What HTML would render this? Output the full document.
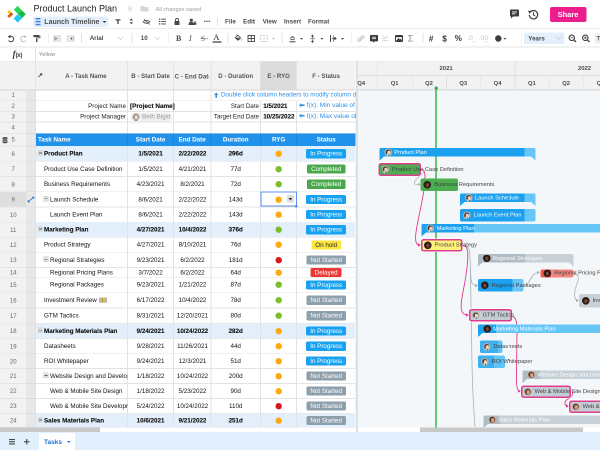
<!DOCTYPE html><html><head><meta charset="utf-8"><style>
html,body{margin:0;padding:0;width:600px;height:450px;overflow:hidden;background:#fff;font-family:"Liberation Sans", sans-serif;-webkit-font-smoothing:antialiased;}
#wrap{position:absolute;left:0;top:0;width:1200px;height:900px;transform:scale(0.5);transform-origin:0 0;will-change:transform;overflow:hidden;}
#root{position:absolute;left:0;top:0;width:600px;height:450px;overflow:hidden;zoom:2;background:#fff;}
</style></head><body><div id="wrap"><div id="root">
<svg style="position:absolute;left:0px;top:0px;overflow:visible;" width="30" height="25" viewBox="0 0 30 25">
<polygon points="17.7,5.9 21.6,10.1 18,14 13.8,9.7" fill="#24d653"/>
<polygon points="21.6,10.1 25.8,14.1 22.1,18.1 18,14" fill="#17b84a"/>
<polygon points="17.6,14.1 22.1,18.1 17.7,22.6 13.6,18.4" fill="#22c8ef"/>
<polygon points="9.4,10 11.4,12.2 9.4,14.2 7.2,11.9" fill="#f7c316"/>
<polygon points="11.4,12.2 13.2,14.2 11.1,16.2 9.3,14.2" fill="#c85a10"/>
<polygon points="9.3,14.1 11.2,16.1 9.1,18 7.2,16" fill="#ee5a12"/>
</svg>
<div style="position:absolute;left:33.5px;top:4.2px;font-size:9px;line-height:9px;color:#1a1a1a;font-weight:400;white-space:nowrap;">Product Launch Plan</div>
<svg style="position:absolute;left:126px;top:4.5px;overflow:visible;" width="8" height="8" viewBox="0 0 8 8"><polygon points="4,0.3 5.1,2.8 7.8,3 5.7,4.8 6.4,7.6 4,6.1 1.6,7.6 2.3,4.8 0.2,3 2.9,2.8" fill="#e6e6e6"/></svg>
<svg style="position:absolute;left:140.5px;top:5.5px;overflow:visible;" width="8" height="6" viewBox="0 0 8 6"><path d="M0,0.5 h3 l1,1 h4 v4.5 h-8z" fill="#d6d6d6"/></svg>
<div style="position:absolute;left:155.6px;top:6.6px;font-size:5.6px;line-height:5.6px;color:#9a9a9a;font-weight:400;white-space:nowrap;">All changes saved</div>
<div style="position:absolute;left:33px;top:16.3px;width:75.5px;height:10.5px;background:#e3f0fc;border-radius:1.5px;"></div>
<svg style="position:absolute;left:35.5px;top:17.8px;overflow:visible;" width="5" height="7.4" viewBox="0 0 5 7.4"><rect x="0" y="0" width="5" height="1.5" fill="#3a86ee"/><rect x="0" y="2.9" width="5" height="1.5" fill="#3a86ee"/><rect x="0" y="5.8" width="5" height="1.5" fill="#3a86ee"/></svg>
<div style="position:absolute;left:44.3px;top:14.600000000000001px;height:14px;font-size:7px;line-height:14px;color:#505050;font-weight:700;white-space:nowrap;">Launch Timeline</div>
<svg style="position:absolute;left:102.5px;top:20.8px;overflow:visible;" width="4" height="2" viewBox="0 0 4 2"><polygon points="0,0 4,0 2,2" fill="#444"/></svg>
<svg style="position:absolute;left:115.3px;top:19px;overflow:visible;" width="5" height="5" viewBox="0 0 5 5"><path d="M0,0.2 h5 v1.3 h-1.8 v3.5 h-1.4 v-3.5 h-1.8z" fill="#4a4a4a"/></svg>
<svg style="position:absolute;left:129.7px;top:18.6px;overflow:visible;" width="3.6" height="5.8" viewBox="0 0 3.6 5.8"><polygon points="1.8,0 3.6,2 0,2" fill="#4a4a4a"/><polygon points="1.8,5.8 3.6,3.8 0,3.8" fill="#4a4a4a"/></svg>
<svg style="position:absolute;left:142.3px;top:18.8px;overflow:visible;" width="8" height="5.6" viewBox="0 0 8 5.6"><path d="M0.6,2.8 Q4,-0.3 7.4,2.8 Q4,5.9 0.6,2.8z" fill="none" stroke="#4a4a4a" stroke-width="0.8"/><line x1="1.4" y1="0.3" x2="7.2" y2="5.4" stroke="#4a4a4a" stroke-width="0.8"/></svg>
<svg style="position:absolute;left:159px;top:18.3px;overflow:visible;" width="7" height="6" viewBox="0 0 7 6"><rect x="0" y="0" width="1.2" height="1.2" fill="#4a4a4a"/><rect x="0" y="2.4" width="1.2" height="1.2" fill="#4a4a4a"/><rect x="0" y="4.8" width="1.2" height="1.2" fill="#4a4a4a"/><rect x="2.2" y="0.2" width="4.8" height="0.9" fill="#4a4a4a"/><rect x="2.2" y="2.6" width="4.8" height="0.9" fill="#4a4a4a"/><rect x="2.2" y="5" width="4.8" height="0.9" fill="#4a4a4a"/></svg>
<svg style="position:absolute;left:174.5px;top:18px;overflow:visible;" width="5" height="7" viewBox="0 0 5 7"><path d="M1,3 v-1 a1.5,1.5 0 0 1 3,0 v1" fill="none" stroke="#4a4a4a" stroke-width="0.9"/><rect x="0" y="3" width="5" height="4" rx="0.5" fill="#4a4a4a"/></svg>
<svg style="position:absolute;left:188.3px;top:18.3px;overflow:visible;" width="8" height="6.5" viewBox="0 0 8 6.5"><circle cx="2.8" cy="1.7" r="1.6" fill="#4a4a4a"/><path d="M0,6.5 q0,-3.2 2.8,-3.2 q2.8,0 2.8,3.2z" fill="#4a4a4a"/><rect x="5.2" y="4" width="2.6" height="2.4" fill="#4a4a4a"/><path d="M5.8,4 v-0.6 a0.7,0.7 0 0 1 1.4,0 v0.6" fill="none" stroke="#4a4a4a" stroke-width="0.5"/></svg>
<svg style="position:absolute;left:204px;top:20.5px;overflow:visible;" width="6" height="2" viewBox="0 0 6 2"><rect x="0" y="0.2" width="1.4" height="1.2" fill="#4a4a4a"/><rect x="2.3" y="0.2" width="1.4" height="1.2" fill="#4a4a4a"/><rect x="4.6" y="0.2" width="1.4" height="1.2" fill="#4a4a4a"/></svg>
<div style="position:absolute;left:217px;top:18px;width:0.8px;height:8px;background:#e0e0e0;"></div>
<div style="position:absolute;left:225px;top:15.3px;height:12.6px;font-size:6.3px;line-height:12.6px;color:#4d4d4d;font-weight:700;white-space:nowrap;">File</div>
<div style="position:absolute;left:243px;top:15.3px;height:12.6px;font-size:6.3px;line-height:12.6px;color:#4d4d4d;font-weight:700;white-space:nowrap;">Edit</div>
<div style="position:absolute;left:262.6px;top:15.3px;height:12.6px;font-size:6.3px;line-height:12.6px;color:#4d4d4d;font-weight:700;white-space:nowrap;">View</div>
<div style="position:absolute;left:284px;top:15.3px;height:12.6px;font-size:6.3px;line-height:12.6px;color:#4d4d4d;font-weight:700;white-space:nowrap;">Insert</div>
<div style="position:absolute;left:308px;top:15.3px;height:12.6px;font-size:6.3px;line-height:12.6px;color:#4d4d4d;font-weight:700;white-space:nowrap;">Format</div>
<svg style="position:absolute;left:509.5px;top:9.5px;overflow:visible;" width="10" height="9" viewBox="0 0 10 9"><path d="M0.5,1 a1,1 0 0 1 1,-1 h7 a1,1 0 0 1 1,1 v5 a1,1 0 0 1 -1,1 h-5 l-2,2 v-2 h0 a1,1 0 0 1 -1,-1z" fill="#3c3c3c"/><rect x="2.5" y="2" width="5" height="0.9" fill="#fff"/><rect x="2.5" y="3.9" width="3.5" height="0.9" fill="#fff"/></svg>
<svg style="position:absolute;left:528px;top:9.5px;overflow:visible;" width="10" height="10" viewBox="0 0 10 10"><path d="M2.2,2.6 A4.2,4.2 0 1 1 1.3,5.6" fill="none" stroke="#3c3c3c" stroke-width="1.2"/><polygon points="0,1.2 3.6,1.4 1.6,4.4" fill="#3c3c3c"/><path d="M5.5,2.8 v2.6 l1.8,1.3" fill="none" stroke="#3c3c3c" stroke-width="1"/></svg>
<div style="position:absolute;left:550px;top:7px;width:36.3px;height:15px;background:#ec1d8c;border-radius:2px;"></div>
<div style="position:absolute;left:468px;top:7.1px;width:200px;height:15.0px;font-size:7.5px;line-height:15.0px;color:#fff;font-weight:700;text-align:center;white-space:nowrap;">Share</div>
<div style="position:absolute;left:0px;top:28px;width:600px;height:1px;background:#ececec;"></div>
<div style="position:absolute;left:0px;top:46.6px;width:600px;height:0.8px;background:#e4e4e4;"></div>
<svg style="position:absolute;left:7.5px;top:35px;overflow:visible;" width="7" height="7" viewBox="0 0 7 7"><path d="M2.2,1.6 A2.7,2.7 0 1 1 1.2,5.4" fill="none" stroke="#474747" stroke-width="1.1"/><polygon points="0,1.6 3,0 3,3.2" fill="#474747"/></svg>
<svg style="position:absolute;left:20px;top:35px;overflow:visible;" width="7" height="7" viewBox="0 0 7 7"><path d="M4.8,1.6 A2.7,2.7 0 1 0 5.8,5.4" fill="none" stroke="#c4c4c4" stroke-width="1"/><polygon points="7,1.6 4,0 4,3.2" fill="#c4c4c4"/></svg>
<svg style="position:absolute;left:33.2px;top:35.2px;overflow:visible;" width="8" height="7.5" viewBox="0 0 8 7.5"><rect x="0.3" y="0" width="6" height="2.1" rx="0.5" fill="#474747"/><path d="M6.3,1 h0.7 v1.9 h-3.3 v0.9" fill="none" stroke="#474747" stroke-width="0.7"/><rect x="3" y="3.6" width="1.4" height="3.4" fill="#474747"/></svg>
<div style="position:absolute;left:47.8px;top:33px;width:0.8px;height:10px;background:#e0e0e0;"></div>
<svg style="position:absolute;left:53px;top:35px;overflow:visible;" width="8" height="7" viewBox="0 0 8 7"><rect x="0" y="0" width="8" height="7" fill="#e6e6e6"/><rect x="1" y="1.5" width="0.7" height="4" fill="#999"/><polygon points="2.5,2.2 4,3.5 2.5,4.8" fill="#474747"/></svg>
<svg style="position:absolute;left:66.5px;top:35px;overflow:visible;" width="8" height="7" viewBox="0 0 8 7"><rect x="0" y="0" width="8" height="7" fill="#e6e6e6"/><rect x="6.3" y="1.5" width="0.7" height="4" fill="#999"/><polygon points="5.5,2.2 4,3.5 5.5,4.8" fill="#474747"/></svg>
<div style="position:absolute;left:81px;top:33px;width:0.8px;height:10px;background:#e0e0e0;"></div>
<div style="position:absolute;left:89.7px;top:32.199999999999996px;height:12.4px;font-size:6.2px;line-height:12.4px;color:#4a4a4a;font-weight:700;white-space:nowrap;">Arial</div>
<svg style="position:absolute;left:118px;top:37px;overflow:visible;" width="5" height="3" viewBox="0 0 5 3"><polyline points="0,0 2.5,2.5 5,0" fill="none" stroke="#c8c8c8" stroke-width="0.7"/></svg>
<div style="position:absolute;left:131.5px;top:33px;width:0.8px;height:10px;background:#e0e0e0;"></div>
<div style="position:absolute;left:140.8px;top:32.199999999999996px;height:12.4px;font-size:6.2px;line-height:12.4px;color:#4a4a4a;font-weight:700;white-space:nowrap;">10</div>
<svg style="position:absolute;left:155px;top:37px;overflow:visible;" width="5" height="3" viewBox="0 0 5 3"><polyline points="0,0 2.5,2.5 5,0" fill="none" stroke="#c8c8c8" stroke-width="0.7"/></svg>
<div style="position:absolute;left:168.3px;top:33px;width:0.8px;height:10px;background:#e0e0e0;"></div>
<div style="position:absolute;left:176px;top:30.6px;height:16px;font-size:8px;line-height:16px;color:#4a4a4a;font-weight:700;white-space:nowrap;font-family:'Liberation Serif',serif;">B</div>
<div style="position:absolute;left:189px;top:30.6px;height:16px;font-size:8px;line-height:16px;color:#4a4a4a;font-weight:400;white-space:nowrap;font-family:'Liberation Serif',serif;font-style:italic;">I</div>
<div style="position:absolute;left:201px;top:31.1px;height:15.0px;font-size:7.5px;line-height:15.0px;color:#5a5a5a;font-weight:400;white-space:nowrap;font-family:'Liberation Serif',serif;">S</div>
<div style="position:absolute;left:200.5px;top:38.3px;width:7.5px;height:0.8px;background:#5a5a5a;"></div>
<div style="position:absolute;left:213.3px;top:29.0px;height:17.2px;font-size:8.6px;line-height:17.2px;color:#2a2a2a;font-weight:400;white-space:nowrap;font-family:'Liberation Serif',serif;">A</div>
<div style="position:absolute;left:212.5px;top:41.4px;width:9.2px;height:1.3px;background:#111;"></div>
<div style="position:absolute;left:227.5px;top:33px;width:0.8px;height:10px;background:#e0e0e0;"></div>
<svg style="position:absolute;left:234px;top:34.5px;overflow:visible;" width="8" height="7.5" viewBox="0 0 8 7.5"><path d="M1.2,3.2 L3.8,0.8 L6.6,3.4 L4,5.8z" fill="none" stroke="#474747" stroke-width="0.8"/><path d="M1.2,3.2 L6.6,3.4 L4,5.8z" fill="#474747"/><path d="M7.3,4.4 q0.8,1 0,1.8 q-0.8,-0.8 0,-1.8z" fill="#474747"/><line x1="2.6" y1="0" x2="3.8" y2="1.2" stroke="#474747" stroke-width="0.7"/></svg>
<svg style="position:absolute;left:247.5px;top:35px;overflow:visible;" width="7.5" height="7" viewBox="0 0 7.5 7"><rect x="0.5" y="0.5" width="6.5" height="6" fill="none" stroke="#474747" stroke-width="0.9"/><line x1="3.75" y1="0.5" x2="3.75" y2="6.5" stroke="#474747" stroke-width="0.9"/><line x1="0.5" y1="3.5" x2="7" y2="3.5" stroke="#474747" stroke-width="0.9"/></svg>
<svg style="position:absolute;left:260px;top:35px;overflow:visible;" width="8" height="7" viewBox="0 0 8 7"><rect x="0.5" y="0.5" width="7" height="6" fill="none" stroke="#c4c4c4" stroke-width="0.8" stroke-dasharray="1.4,0.7"/><line x1="4" y1="0.5" x2="4" y2="6.5" stroke="#c4c4c4" stroke-width="0.6" stroke-dasharray="1,0.8"/><line x1="0.5" y1="3.5" x2="7.5" y2="3.5" stroke="#c4c4c4" stroke-width="0.6" stroke-dasharray="1,0.8"/></svg>
<svg style="position:absolute;left:272px;top:37.8px;overflow:visible;" width="3" height="2" viewBox="0 0 3 2"><polygon points="0,0 3,0 1.5,1.8" fill="#bbb"/></svg>
<div style="position:absolute;left:281.7px;top:33px;width:0.8px;height:10px;background:#e0e0e0;"></div>
<svg style="position:absolute;left:289px;top:34.8px;overflow:visible;" width="7" height="8" viewBox="0 0 7 8"><rect x="0.5" y="6.3" width="6" height="1" fill="#474747"/><rect x="1.5" y="4.2" width="4" height="0.9" fill="#474747"/><path d="M1.5,3.5 q2,-3.5 4,0" fill="none" stroke="#474747" stroke-width="0.9"/></svg>
<svg style="position:absolute;left:300px;top:37.8px;overflow:visible;" width="3" height="2" viewBox="0 0 3 2"><polygon points="0,0 3,0 1.5,1.8" fill="#474747"/></svg>
<svg style="position:absolute;left:310px;top:34.5px;overflow:visible;" width="5" height="8.5" viewBox="0 0 5 8.5"><polygon points="2.5,0 4.2,2 0.8,2" fill="#474747"/><polygon points="2.5,8.5 4.2,6.5 0.8,6.5" fill="#474747"/><rect x="2.1" y="1.8" width="0.8" height="1.8" fill="#474747"/><rect x="2.1" y="5" width="0.8" height="1.8" fill="#474747"/><rect x="0" y="4" width="5" height="0.6" fill="#474747"/></svg>
<svg style="position:absolute;left:320.5px;top:37.8px;overflow:visible;" width="3" height="2" viewBox="0 0 3 2"><polygon points="0,0 3,0 1.5,1.8" fill="#474747"/></svg>
<svg style="position:absolute;left:330px;top:35px;overflow:visible;" width="7" height="7" viewBox="0 0 7 7"><rect x="0" y="0" width="1" height="7" fill="#474747"/><path d="M2.3,3.5 h3.2 M4.5,2 l1.5,1.5 l-1.5,1.5" fill="none" stroke="#474747" stroke-width="0.9"/><rect x="3" y="0" width="0.9" height="7" fill="#474747" opacity="0.6"/></svg>
<svg style="position:absolute;left:340.8px;top:37.8px;overflow:visible;" width="3" height="2" viewBox="0 0 3 2"><polygon points="0,0 3,0 1.5,1.8" fill="#474747"/></svg>
<div style="position:absolute;left:350.8px;top:33px;width:0.8px;height:10px;background:#e0e0e0;"></div>
<svg style="position:absolute;left:357.5px;top:35px;overflow:visible;" width="7" height="7" viewBox="0 0 7 7"><path d="M3,2.5 l1.5,-1.5 a1.2,1.2 0 0 1 1.7,1.7 l-1.5,1.5 M4,4.5 l-1.5,1.5 a1.2,1.2 0 0 1 -1.7,-1.7 l1.5,-1.5 M2.5,4.5 l2,-2" fill="none" stroke="#bdbdbd" stroke-width="0.9"/></svg>
<svg style="position:absolute;left:370px;top:35px;overflow:visible;" width="8" height="8" viewBox="0 0 8 8"><path d="M0,0.8 a0.8,0.8 0 0 1 0.8,-0.8 h6.4 a0.8,0.8 0 0 1 0.8,0.8 v4.8 a0.8,0.8 0 0 1 -0.8,0.8 h-2.4 l-1,1.2 l-1,-1.2 h-2 a0.8,0.8 0 0 1 -0.8,-0.8z" fill="#3a3a3a"/><rect x="2" y="1.8" width="4" height="0.8" fill="#fff"/><rect x="2" y="3.3" width="4" height="0.8" fill="#fff"/></svg>
<svg style="position:absolute;left:382.5px;top:35px;overflow:visible;" width="6" height="6" viewBox="0 0 6 6"><path d="M0.5,0 v5.5 h5.5" fill="none" stroke="#cdcdcd" stroke-width="0.7"/><polyline points="1.5,4 2.8,2 3.8,3 5.5,0.8" fill="none" stroke="#cdcdcd" stroke-width="0.7"/></svg>
<svg style="position:absolute;left:395px;top:35px;overflow:visible;" width="8" height="7" viewBox="0 0 8 7"><rect x="0.5" y="0.5" width="7" height="6" rx="0.6" fill="none" stroke="#3a3a3a" stroke-width="1"/><polygon points="1,6 3.5,3 5,4.5 6,3.5 7,6" fill="#3a3a3a"/><rect x="1" y="1" width="6" height="1.2" fill="#3a3a3a"/></svg>
<div style="position:absolute;left:407.8px;top:29.6px;height:18px;font-size:9px;line-height:18px;color:#8a8a8a;font-weight:400;white-space:nowrap;">&#931;</div>
<div style="position:absolute;left:422.5px;top:33px;width:0.8px;height:10px;background:#e0e0e0;"></div>
<div style="position:absolute;left:428.8px;top:30.3px;height:16.6px;font-size:8.3px;line-height:16.6px;color:#333;font-weight:700;white-space:nowrap;">#</div>
<div style="position:absolute;left:442.3px;top:30.3px;height:16.6px;font-size:8.3px;line-height:16.6px;color:#333;font-weight:700;white-space:nowrap;">$</div>
<div style="position:absolute;left:454.8px;top:30.6px;height:16px;font-size:8px;line-height:16px;color:#333;font-weight:700;white-space:nowrap;">%</div>
<div style="position:absolute;left:467.5px;top:31.299999999999997px;height:13.0px;font-size:6.5px;line-height:13.0px;color:#c0c0c0;font-weight:400;white-space:nowrap;">.0</div>
<div style="position:absolute;left:479px;top:31.299999999999997px;height:13.0px;font-size:6.5px;line-height:13.0px;color:#c0c0c0;font-weight:400;white-space:nowrap;">.00</div>
<div style="position:absolute;left:471px;top:41.5px;width:4px;height:0.6px;background:#ccc;"></div>
<div style="position:absolute;left:485px;top:41.5px;width:3px;height:0.6px;background:#ccc;"></div>
<svg style="position:absolute;left:495px;top:35px;overflow:visible;" width="7" height="7" viewBox="0 0 7 7"><circle cx="3.3" cy="3.5" r="3.2" fill="#3c3c3c"/></svg>
<svg style="position:absolute;left:503.5px;top:37.8px;overflow:visible;" width="3" height="2" viewBox="0 0 3 2"><polygon points="0,0 3,0 1.5,1.8" fill="#444"/></svg>
<div style="position:absolute;left:520.8px;top:31px;width:0.8px;height:15px;background:#e6e6e6;"></div>
<div style="position:absolute;left:524px;top:32.7px;width:40.7px;height:11.3px;background:#e3f0fc;border-radius:1.5px;"></div>
<div style="position:absolute;left:528.3px;top:32.699999999999996px;height:12.4px;font-size:6.2px;line-height:12.4px;color:#4a4a4a;font-weight:700;white-space:nowrap;">Years</div>
<svg style="position:absolute;left:556.5px;top:37px;overflow:visible;" width="4.5" height="2.6" viewBox="0 0 4.5 2.6"><polyline points="0,0 2.25,2.3 4.5,0" fill="none" stroke="#b9c6d4" stroke-width="0.7"/></svg>
<svg style="position:absolute;left:568.7px;top:34.5px;overflow:visible;" width="8" height="8" viewBox="0 0 8 8"><circle cx="3.3" cy="3.3" r="2.7" fill="none" stroke="#3c3c3c" stroke-width="1.1"/><line x1="5.2" y1="5.2" x2="7.5" y2="7.5" stroke="#3c3c3c" stroke-width="1.3"/><line x1="2" y1="3.3" x2="4.6" y2="3.3" stroke="#3c3c3c" stroke-width="0.8"/></svg>
<svg style="position:absolute;left:582px;top:34.5px;overflow:visible;" width="8" height="8" viewBox="0 0 8 8"><circle cx="3.3" cy="3.3" r="2.7" fill="none" stroke="#3c3c3c" stroke-width="1.1"/><line x1="5.2" y1="5.2" x2="7.5" y2="7.5" stroke="#3c3c3c" stroke-width="1.3"/><line x1="2" y1="3.3" x2="4.6" y2="3.3" stroke="#3c3c3c" stroke-width="0.8"/><line x1="3.3" y1="2" x2="3.3" y2="4.6" stroke="#3c3c3c" stroke-width="0.8"/></svg>
<div style="position:absolute;left:594.5px;top:33px;width:8px;height:11px;background:#f0f0f0;border-radius:1.5px;"></div>
<div style="position:absolute;left:596.5px;top:32.4px;height:12px;font-size:6px;line-height:12px;color:#555;font-weight:700;white-space:nowrap;">T</div>
<div style="position:absolute;left:0px;top:60.8px;width:600px;height:0.7px;background:#e4e4e4;"></div>
<div style="position:absolute;left:35px;top:47px;width:0.8px;height:14px;background:#e4e4e4;"></div>
<div style="position:absolute;left:12.6px;top:48.2px;height:12px;font-size:6px;line-height:12px;color:#333;font-weight:400;white-space:nowrap;"><i style="font-family:'Liberation Serif',serif;font-size:9px;font-weight:700">f</i><span style="font-size:6px;font-weight:700;letter-spacing:-0.3px">(x)</span></div>
<div style="position:absolute;left:38.8px;top:48.1px;height:11.6px;font-size:5.8px;line-height:11.6px;color:#8a8a8a;font-weight:400;white-space:nowrap;">Yellow</div>
<div style="position:absolute;left:0px;top:61.3px;width:355.5px;height:28.5px;background:#f2f2f2;"></div>
<div style="position:absolute;left:260.5px;top:61.3px;width:36.5px;height:28.5px;background:#dcdcdc;"></div>
<div style="position:absolute;left:0px;top:89.8px;width:26px;height:337.7px;background:#f2f2f2;"></div>
<div style="position:absolute;left:26px;top:89.8px;width:9.5px;height:337.7px;background:#e8e8e8;"></div>
<div style="position:absolute;left:35.3px;top:61.3px;width:0.8px;height:366.2px;background:#dadada;"></div>
<div style="position:absolute;left:0px;top:192px;width:26px;height:15px;background:#dedede;"></div>
<div style="position:absolute;left:127.2px;top:61.3px;width:1px;height:28.5px;background:#e2e2e2;"></div>
<div style="position:absolute;left:172.9px;top:61.3px;width:1px;height:28.5px;background:#e2e2e2;"></div>
<div style="position:absolute;left:210.4px;top:61.3px;width:1px;height:28.5px;background:#e2e2e2;"></div>
<div style="position:absolute;left:260.0px;top:61.3px;width:1px;height:28.5px;background:#e2e2e2;"></div>
<div style="position:absolute;left:295.8px;top:61.3px;width:1px;height:28.5px;background:#e2e2e2;"></div>
<div style="position:absolute;left:0px;top:89.6px;width:355.5px;height:0.7px;background:#d6d6d6;"></div>
<div style="position:absolute;left:-14.150000000000006px;top:70.2px;width:200px;height:12.2px;font-size:6.1px;line-height:12.2px;color:#555;font-weight:700;text-align:center;white-space:nowrap;">A - Task Name</div>
<div style="position:absolute;left:50.55000000000001px;top:70.2px;width:200px;height:12.2px;font-size:6.1px;line-height:12.2px;color:#555;font-weight:700;text-align:center;white-space:nowrap;">B - Start Date</div>
<div style="position:absolute;left:174.6px;top:70.3px;width:34.3px;height:12px;overflow:hidden;"><div style="font-size:6.28px;line-height:12px;color:#555;font-weight:700;white-space:nowrap;">C - End Date</div></div>
<div style="position:absolute;left:135.7px;top:70.2px;width:200px;height:12.2px;font-size:6.1px;line-height:12.2px;color:#555;font-weight:700;text-align:center;white-space:nowrap;">D - Duration</div>
<div style="position:absolute;left:178.64999999999998px;top:70.2px;width:200px;height:12.2px;font-size:6.1px;line-height:12.2px;color:#555;font-weight:700;text-align:center;white-space:nowrap;">E - RYG</div>
<div style="position:absolute;left:226.14999999999998px;top:70.2px;width:200px;height:12.2px;font-size:6.1px;line-height:12.2px;color:#555;font-weight:700;text-align:center;white-space:nowrap;">F - Status</div>
<svg style="position:absolute;left:37.8px;top:72.3px;overflow:visible;" width="5" height="5" viewBox="0 0 5 5"><path d="M0.3,4.7 L2.2,2.8" stroke="#4a5060" stroke-width="0.8"/><path d="M1.6,2.2 L3.2,0.3 L4.7,1.8 L2.8,3.4z" fill="#4a5060"/></svg>
<div style="position:absolute;left:36px;top:90.3px;width:319.5px;height:337.2px;background:#fff;"></div>
<div style="position:absolute;left:355.8px;top:61.3px;width:2.2px;height:371px;background:#e0e0e0;"></div>
<div style="position:absolute;left:36px;top:100.45px;width:319.5px;height:0.7px;background:#e3e3e3;"></div>
<div style="position:absolute;left:36px;top:111.15px;width:319.5px;height:0.7px;background:#e3e3e3;"></div>
<div style="position:absolute;left:36px;top:121.65px;width:319.5px;height:0.7px;background:#e3e3e3;"></div>
<div style="position:absolute;left:36px;top:133.15px;width:319.5px;height:0.7px;background:#e3e3e3;"></div>
<div style="position:absolute;left:127.2px;top:90.3px;width:1px;height:43.2px;background:#e3e3e3;"></div>
<div style="position:absolute;left:172.9px;top:90.3px;width:1px;height:43.2px;background:#e3e3e3;"></div>
<div style="position:absolute;left:210.4px;top:90.3px;width:1px;height:43.2px;background:#e3e3e3;"></div>
<div style="position:absolute;left:260.0px;top:100.8px;width:1px;height:32.7px;background:#e3e3e3;"></div>
<div style="position:absolute;left:295.8px;top:100.8px;width:1px;height:32.7px;background:#e3e3e3;"></div>
<div style="position:absolute;left:355px;top:90.3px;width:0.5px;height:337px;background:#e3e3e3;"></div>
<div style="position:absolute;left:-86.8px;top:89.2px;width:200px;height:12px;font-size:6px;line-height:12px;color:#666;font-weight:400;text-align:center;white-space:nowrap;">1</div>
<div style="position:absolute;left:0px;top:100.45px;width:26px;height:0.7px;background:#e4e4e4;"></div>
<div style="position:absolute;left:26px;top:100.45px;width:9.5px;height:0.7px;background:#dcdcdc;"></div>
<div style="position:absolute;left:-86.8px;top:99.95px;width:200px;height:12px;font-size:6px;line-height:12px;color:#666;font-weight:400;text-align:center;white-space:nowrap;">2</div>
<div style="position:absolute;left:0px;top:111.15px;width:26px;height:0.7px;background:#e4e4e4;"></div>
<div style="position:absolute;left:26px;top:111.15px;width:9.5px;height:0.7px;background:#dcdcdc;"></div>
<div style="position:absolute;left:-86.8px;top:110.55px;width:200px;height:12px;font-size:6px;line-height:12px;color:#666;font-weight:400;text-align:center;white-space:nowrap;">3</div>
<div style="position:absolute;left:0px;top:121.65px;width:26px;height:0.7px;background:#e4e4e4;"></div>
<div style="position:absolute;left:26px;top:121.65px;width:9.5px;height:0.7px;background:#dcdcdc;"></div>
<div style="position:absolute;left:-86.8px;top:121.55px;width:200px;height:12px;font-size:6px;line-height:12px;color:#666;font-weight:400;text-align:center;white-space:nowrap;">4</div>
<div style="position:absolute;left:0px;top:133.15px;width:26px;height:0.7px;background:#e4e4e4;"></div>
<div style="position:absolute;left:26px;top:133.15px;width:9.5px;height:0.7px;background:#dcdcdc;"></div>
<div style="position:absolute;left:-86.8px;top:133.55px;width:200px;height:12px;font-size:6px;line-height:12px;color:#666;font-weight:400;text-align:center;white-space:nowrap;">5</div>
<div style="position:absolute;left:0px;top:145.65px;width:26px;height:0.7px;background:#e4e4e4;"></div>
<div style="position:absolute;left:26px;top:145.65px;width:9.5px;height:0.7px;background:#dcdcdc;"></div>
<div style="position:absolute;left:-86.8px;top:147.85px;width:200px;height:12px;font-size:6px;line-height:12px;color:#666;font-weight:400;text-align:center;white-space:nowrap;">6</div>
<div style="position:absolute;left:0px;top:160.95000000000002px;width:26px;height:0.7px;background:#e4e4e4;"></div>
<div style="position:absolute;left:26px;top:160.95000000000002px;width:9.5px;height:0.7px;background:#dcdcdc;"></div>
<div style="position:absolute;left:-86.8px;top:163.1px;width:200px;height:12px;font-size:6px;line-height:12px;color:#666;font-weight:400;text-align:center;white-space:nowrap;">7</div>
<div style="position:absolute;left:0px;top:176.15px;width:26px;height:0.7px;background:#e4e4e4;"></div>
<div style="position:absolute;left:26px;top:176.15px;width:9.5px;height:0.7px;background:#dcdcdc;"></div>
<div style="position:absolute;left:-86.8px;top:178.35px;width:200px;height:12px;font-size:6px;line-height:12px;color:#666;font-weight:400;text-align:center;white-space:nowrap;">8</div>
<div style="position:absolute;left:0px;top:191.45000000000002px;width:26px;height:0.7px;background:#e4e4e4;"></div>
<div style="position:absolute;left:26px;top:191.45000000000002px;width:9.5px;height:0.7px;background:#dcdcdc;"></div>
<div style="position:absolute;left:-86.8px;top:193.6px;width:200px;height:12px;font-size:6px;line-height:12px;color:#666;font-weight:400;text-align:center;white-space:nowrap;">9</div>
<div style="position:absolute;left:0px;top:206.65px;width:26px;height:0.7px;background:#e4e4e4;"></div>
<div style="position:absolute;left:26px;top:206.65px;width:9.5px;height:0.7px;background:#dcdcdc;"></div>
<div style="position:absolute;left:-86.8px;top:208.75px;width:200px;height:12px;font-size:6px;line-height:12px;color:#666;font-weight:400;text-align:center;white-space:nowrap;">10</div>
<div style="position:absolute;left:0px;top:221.75px;width:26px;height:0.7px;background:#e4e4e4;"></div>
<div style="position:absolute;left:26px;top:221.75px;width:9.5px;height:0.7px;background:#dcdcdc;"></div>
<div style="position:absolute;left:-86.8px;top:223.84999999999997px;width:200px;height:12px;font-size:6px;line-height:12px;color:#666;font-weight:400;text-align:center;white-space:nowrap;">11</div>
<div style="position:absolute;left:0px;top:236.85px;width:26px;height:0.7px;background:#e4e4e4;"></div>
<div style="position:absolute;left:26px;top:236.85px;width:9.5px;height:0.7px;background:#dcdcdc;"></div>
<div style="position:absolute;left:-86.8px;top:238.95px;width:200px;height:12px;font-size:6px;line-height:12px;color:#666;font-weight:400;text-align:center;white-space:nowrap;">12</div>
<div style="position:absolute;left:0px;top:251.95000000000002px;width:26px;height:0.7px;background:#e4e4e4;"></div>
<div style="position:absolute;left:26px;top:251.95000000000002px;width:9.5px;height:0.7px;background:#dcdcdc;"></div>
<div style="position:absolute;left:-86.8px;top:254.09999999999997px;width:200px;height:12px;font-size:6px;line-height:12px;color:#666;font-weight:400;text-align:center;white-space:nowrap;">13</div>
<div style="position:absolute;left:0px;top:267.15px;width:26px;height:0.7px;background:#e4e4e4;"></div>
<div style="position:absolute;left:26px;top:267.15px;width:9.5px;height:0.7px;background:#dcdcdc;"></div>
<div style="position:absolute;left:-86.8px;top:266.65px;width:200px;height:12px;font-size:6px;line-height:12px;color:#666;font-weight:400;text-align:center;white-space:nowrap;">14</div>
<div style="position:absolute;left:0px;top:277.04999999999995px;width:26px;height:0.7px;background:#e4e4e4;"></div>
<div style="position:absolute;left:26px;top:277.04999999999995px;width:9.5px;height:0.7px;background:#dcdcdc;"></div>
<div style="position:absolute;left:-86.8px;top:278.99999999999994px;width:200px;height:12px;font-size:6px;line-height:12px;color:#666;font-weight:400;text-align:center;white-space:nowrap;">15</div>
<div style="position:absolute;left:0px;top:291.84999999999997px;width:26px;height:0.7px;background:#e4e4e4;"></div>
<div style="position:absolute;left:26px;top:291.84999999999997px;width:9.5px;height:0.7px;background:#dcdcdc;"></div>
<div style="position:absolute;left:-86.8px;top:294.3px;width:200px;height:12px;font-size:6px;line-height:12px;color:#666;font-weight:400;text-align:center;white-space:nowrap;">16</div>
<div style="position:absolute;left:0px;top:307.65px;width:26px;height:0.7px;background:#e4e4e4;"></div>
<div style="position:absolute;left:26px;top:307.65px;width:9.5px;height:0.7px;background:#dcdcdc;"></div>
<div style="position:absolute;left:-86.8px;top:309.84999999999997px;width:200px;height:12px;font-size:6px;line-height:12px;color:#666;font-weight:400;text-align:center;white-space:nowrap;">17</div>
<div style="position:absolute;left:0px;top:322.95px;width:26px;height:0.7px;background:#e4e4e4;"></div>
<div style="position:absolute;left:26px;top:322.95px;width:9.5px;height:0.7px;background:#dcdcdc;"></div>
<div style="position:absolute;left:-86.8px;top:325.15000000000003px;width:200px;height:12px;font-size:6px;line-height:12px;color:#666;font-weight:400;text-align:center;white-space:nowrap;">18</div>
<div style="position:absolute;left:0px;top:338.25px;width:26px;height:0.7px;background:#e4e4e4;"></div>
<div style="position:absolute;left:26px;top:338.25px;width:9.5px;height:0.7px;background:#dcdcdc;"></div>
<div style="position:absolute;left:-86.8px;top:340.3px;width:200px;height:12px;font-size:6px;line-height:12px;color:#666;font-weight:400;text-align:center;white-space:nowrap;">19</div>
<div style="position:absolute;left:0px;top:353.25px;width:26px;height:0.7px;background:#e4e4e4;"></div>
<div style="position:absolute;left:26px;top:353.25px;width:9.5px;height:0.7px;background:#dcdcdc;"></div>
<div style="position:absolute;left:-86.8px;top:355.25px;width:200px;height:12px;font-size:6px;line-height:12px;color:#666;font-weight:400;text-align:center;white-space:nowrap;">20</div>
<div style="position:absolute;left:0px;top:368.15px;width:26px;height:0.7px;background:#e4e4e4;"></div>
<div style="position:absolute;left:26px;top:368.15px;width:9.5px;height:0.7px;background:#dcdcdc;"></div>
<div style="position:absolute;left:-86.8px;top:370.2px;width:200px;height:12px;font-size:6px;line-height:12px;color:#666;font-weight:400;text-align:center;white-space:nowrap;">21</div>
<div style="position:absolute;left:0px;top:383.15px;width:26px;height:0.7px;background:#e4e4e4;"></div>
<div style="position:absolute;left:26px;top:383.15px;width:9.5px;height:0.7px;background:#dcdcdc;"></div>
<div style="position:absolute;left:-86.8px;top:385.2px;width:200px;height:12px;font-size:6px;line-height:12px;color:#666;font-weight:400;text-align:center;white-space:nowrap;">22</div>
<div style="position:absolute;left:0px;top:398.15px;width:26px;height:0.7px;background:#e4e4e4;"></div>
<div style="position:absolute;left:26px;top:398.15px;width:9.5px;height:0.7px;background:#dcdcdc;"></div>
<div style="position:absolute;left:-86.8px;top:400.2px;width:200px;height:12px;font-size:6px;line-height:12px;color:#666;font-weight:400;text-align:center;white-space:nowrap;">23</div>
<div style="position:absolute;left:0px;top:413.15px;width:26px;height:0.7px;background:#e4e4e4;"></div>
<div style="position:absolute;left:26px;top:413.15px;width:9.5px;height:0.7px;background:#dcdcdc;"></div>
<div style="position:absolute;left:-86.8px;top:414.7px;width:200px;height:12px;font-size:6px;line-height:12px;color:#666;font-weight:400;text-align:center;white-space:nowrap;">24</div>
<div style="position:absolute;left:0px;top:427.15px;width:26px;height:0.7px;background:#e4e4e4;"></div>
<div style="position:absolute;left:26px;top:427.15px;width:9.5px;height:0.7px;background:#dcdcdc;"></div>
<svg style="position:absolute;left:214.2px;top:92.3px;overflow:visible;" width="4.4" height="5.4" viewBox="0 0 4.4 5.4"><polygon points="2.2,0 4.4,2.4 3,2.4 3,5.4 1.4,5.4 1.4,2.4 0,2.4" fill="#2e90e6"/></svg>
<div style="position:absolute;left:221px;top:88.7px;height:12.6px;font-size:6.3px;line-height:12.6px;color:#2e90e6;font-weight:400;white-space:nowrap;">Double click column headers to modify column details</div>
<div style="position:absolute;left:-74px;top:99.95px;width:200px;height:12.5px;font-size:6.25px;line-height:12.5px;color:#1e1e1e;font-weight:400;text-align:right;white-space:nowrap;">Project Name</div>
<div style="position:absolute;left:130px;top:99.85000000000001px;height:12.7px;font-size:6.35px;line-height:12.7px;color:#111;font-weight:700;white-space:nowrap;-webkit-text-stroke:0.12px #111;">[Project Name]</div>
<div style="position:absolute;left:-74px;top:110.65px;width:200px;height:12.5px;font-size:6.25px;line-height:12.5px;color:#1e1e1e;font-weight:400;text-align:right;white-space:nowrap;">Project Manager</div>
<div style="position:absolute;left:130.7px;top:112.6px;width:41.3px;height:8.8px;background:#f0f0f0;border-radius:4.4px;"></div>
<svg style="position:absolute;left:132px;top:113px;overflow:visible;" width="8" height="8" viewBox="0 0 8 8"><circle cx="4" cy="4" r="3.9" fill="#d5d0cc"/><circle cx="4" cy="3.8" r="2.9" fill="#9a8478"/><ellipse cx="4.2" cy="4.1" rx="1.6" ry="2" fill="#eddcd0"/><path d="M2.3,7.6 q1.8,-1.6 3.4,0z" fill="#3c7a77"/></svg>
<div style="position:absolute;left:142px;top:110.65px;height:12.5px;font-size:6.25px;line-height:12.5px;color:#9a9a9a;font-weight:400;white-space:nowrap;">Beth Bigid</div>
<div style="position:absolute;left:59px;top:99.95px;width:200px;height:12.5px;font-size:6.25px;line-height:12.5px;color:#1e1e1e;font-weight:400;text-align:right;white-space:nowrap;">Start Date</div>
<div style="position:absolute;left:263.2px;top:99.75px;height:12.5px;font-size:6.25px;line-height:12.5px;color:#111;font-weight:700;white-space:nowrap;-webkit-text-stroke:0.12px #111;">1/5/2021</div>
<div style="position:absolute;left:59px;top:110.65px;width:200px;height:12.5px;font-size:6.25px;line-height:12.5px;color:#1e1e1e;font-weight:400;text-align:right;white-space:nowrap;">Target End Date</div>
<div style="position:absolute;left:263.2px;top:110.45px;height:12.5px;font-size:6.25px;line-height:12.5px;color:#111;font-weight:700;white-space:nowrap;-webkit-text-stroke:0.12px #111;">10/25/2022</div>
<svg style="position:absolute;left:299px;top:102.8px;overflow:visible;" width="5.6" height="4.4" viewBox="0 0 5.6 4.4"><polygon points="0,2.2 2.3,0 2.3,1.4 5.6,1.4 5.6,3 2.3,3 2.3,4.4" fill="#2e90e6"/></svg>
<div style="position:absolute;left:306.8px;top:98.7px;height:13.0px;font-size:6.5px;line-height:13.0px;color:#2e90e6;font-weight:400;white-space:nowrap;">f(x): Min value of Start Date</div>
<svg style="position:absolute;left:299px;top:113.5px;overflow:visible;" width="5.6" height="4.4" viewBox="0 0 5.6 4.4"><polygon points="0,2.2 2.3,0 2.3,1.4 5.6,1.4 5.6,3 2.3,3 2.3,4.4" fill="#2e90e6"/></svg>
<div style="position:absolute;left:306.8px;top:109.4px;height:13.0px;font-size:6.5px;line-height:13.0px;color:#2e90e6;font-weight:400;white-space:nowrap;">f(x): Max value of End Date</div>
<div style="position:absolute;left:36px;top:133.5px;width:319.5px;height:12.5px;background:#2192ec;"></div>
<div style="position:absolute;left:127.2px;top:133.5px;width:1px;height:12.5px;background:#2083d6;"></div>
<div style="position:absolute;left:172.9px;top:133.5px;width:1px;height:12.5px;background:#2083d6;"></div>
<div style="position:absolute;left:210.4px;top:133.5px;width:1px;height:12.5px;background:#2083d6;"></div>
<div style="position:absolute;left:260.0px;top:133.5px;width:1px;height:12.5px;background:#2083d6;"></div>
<div style="position:absolute;left:295.8px;top:133.5px;width:1px;height:12.5px;background:#2083d6;"></div>
<div style="position:absolute;left:38px;top:133.5px;height:12.5px;font-size:6.25px;line-height:12.5px;color:#fff;font-weight:700;white-space:nowrap;">Task Name</div>
<div style="position:absolute;left:50.55000000000001px;top:133.5px;width:200px;height:12.5px;font-size:6.25px;line-height:12.5px;color:#fff;font-weight:700;text-align:center;white-space:nowrap;">Start Date</div>
<div style="position:absolute;left:92.15px;top:133.5px;width:200px;height:12.5px;font-size:6.25px;line-height:12.5px;color:#fff;font-weight:700;text-align:center;white-space:nowrap;">End Date</div>
<div style="position:absolute;left:135.7px;top:133.5px;width:200px;height:12.5px;font-size:6.25px;line-height:12.5px;color:#fff;font-weight:700;text-align:center;white-space:nowrap;">Duration</div>
<div style="position:absolute;left:178.64999999999998px;top:133.5px;width:200px;height:12.5px;font-size:6.25px;line-height:12.5px;color:#fff;font-weight:700;text-align:center;white-space:nowrap;">RYG</div>
<div style="position:absolute;left:226.14999999999998px;top:133.5px;width:200px;height:12.5px;font-size:6.25px;line-height:12.5px;color:#fff;font-weight:700;text-align:center;white-space:nowrap;">Status</div>
<svg style="position:absolute;left:2.3px;top:136.8px;overflow:visible;" width="5" height="6.2" viewBox="0 0 5 6.2"><ellipse cx="2.5" cy="1" rx="2.5" ry="1" fill="#555"/><rect x="0" y="1" width="5" height="4.2" fill="#555"/><ellipse cx="2.5" cy="5.2" rx="2.5" ry="1" fill="#555"/><path d="M0,2.5 q2.5,1.2 5,0 M0,3.9 q2.5,1.2 5,0" stroke="#ddd" stroke-width="0.45" fill="none"/></svg>
<div style="position:absolute;left:36px;top:146px;width:319.5px;height:15.300000000000011px;background:#e3f0fb;"></div>
<div style="position:absolute;left:36px;top:160.95000000000002px;width:319.5px;height:0.7px;background:#e3e3e3;"></div>
<div style="position:absolute;left:127.2px;top:146px;width:1px;height:15.300000000000011px;background:#e3e3e3;"></div>
<div style="position:absolute;left:172.9px;top:146px;width:1px;height:15.300000000000011px;background:#e3e3e3;"></div>
<div style="position:absolute;left:210.4px;top:146px;width:1px;height:15.300000000000011px;background:#e3e3e3;"></div>
<div style="position:absolute;left:260.0px;top:146px;width:1px;height:15.300000000000011px;background:#e3e3e3;"></div>
<div style="position:absolute;left:295.8px;top:146px;width:1px;height:15.300000000000011px;background:#e3e3e3;"></div>
<div style="position:absolute;left:38.0px;top:150.15px;width:4.6px;height:5.6px;background:#e0e0e0;border:0.5px solid #c8c8c8;box-sizing:border-box;"></div>
<div style="position:absolute;left:38.8px;top:152.65px;width:3px;height:0.75px;background:#555;"></div>
<div style="position:absolute;left:44px;top:147.5px;width:83.3px;height:12.5px;overflow:hidden;font-size:6.25px;line-height:12.5px;color:#111;font-weight:700;white-space:nowrap;-webkit-text-stroke:0.12px #111;">Product Plan</div>
<div style="position:absolute;left:50.55000000000001px;top:147.5px;width:200px;height:12.5px;font-size:6.25px;line-height:12.5px;color:#111;font-weight:700;text-align:center;white-space:nowrap;-webkit-text-stroke:0.12px #111;">1/5/2021</div>
<div style="position:absolute;left:174.2px;top:147.5px;width:36.6px;height:12.5px;overflow:hidden;text-align:center;font-size:6.25px;line-height:12.5px;color:#111;font-weight:700;white-space:nowrap;-webkit-text-stroke:0.12px #111;"><span style="display:inline-block;width:200px;margin-left:-81.7px">2/22/2022</span></div>
<div style="position:absolute;left:135.7px;top:147.5px;width:200px;height:12.5px;font-size:6.25px;line-height:12.5px;color:#111;font-weight:700;text-align:center;white-space:nowrap;-webkit-text-stroke:0.12px #111;">296d</div>
<svg style="position:absolute;left:275.7px;top:150.55px;overflow:visible;" width="6.4" height="6.4" viewBox="0 0 6.4 6.4"><circle cx="3.2" cy="3.2" r="3.2" fill="#fcaa12"/></svg>
<div style="position:absolute;left:266.2px;top:149.15px;width:120px;height:9.2px;text-align:center;"><span style="display:inline-block;background:#18a1f0;color:#fff;border-radius:1.6px;padding:0 4px;font-size:6.25px;line-height:9.2px;height:9.2px;white-space:nowrap;vertical-align:top">In Progress</span></div>
<div style="position:absolute;left:36px;top:176.15px;width:319.5px;height:0.7px;background:#e3e3e3;"></div>
<div style="position:absolute;left:127.2px;top:161.3px;width:1px;height:15.199999999999989px;background:#e3e3e3;"></div>
<div style="position:absolute;left:172.9px;top:161.3px;width:1px;height:15.199999999999989px;background:#e3e3e3;"></div>
<div style="position:absolute;left:210.4px;top:161.3px;width:1px;height:15.199999999999989px;background:#e3e3e3;"></div>
<div style="position:absolute;left:260.0px;top:161.3px;width:1px;height:15.199999999999989px;background:#e3e3e3;"></div>
<div style="position:absolute;left:295.8px;top:161.3px;width:1px;height:15.199999999999989px;background:#e3e3e3;"></div>
<div style="position:absolute;left:44px;top:162.75px;width:83.3px;height:12.5px;overflow:hidden;font-size:6.25px;line-height:12.5px;color:#111;font-weight:400;white-space:nowrap;">Product Use Case Definition</div>
<div style="position:absolute;left:50.55000000000001px;top:162.75px;width:200px;height:12.5px;font-size:6.25px;line-height:12.5px;color:#111;font-weight:400;text-align:center;white-space:nowrap;">1/5/2021</div>
<div style="position:absolute;left:174.2px;top:162.75px;width:36.6px;height:12.5px;overflow:hidden;text-align:center;font-size:6.25px;line-height:12.5px;color:#111;font-weight:400;white-space:nowrap;"><span style="display:inline-block;width:200px;margin-left:-81.7px">4/21/2021</span></div>
<div style="position:absolute;left:135.7px;top:162.75px;width:200px;height:12.5px;font-size:6.25px;line-height:12.5px;color:#111;font-weight:400;text-align:center;white-space:nowrap;">77d</div>
<svg style="position:absolute;left:275.7px;top:165.8px;overflow:visible;" width="6.4" height="6.4" viewBox="0 0 6.4 6.4"><circle cx="3.2" cy="3.2" r="3.2" fill="#7bbf31"/></svg>
<div style="position:absolute;left:266.2px;top:164.4px;width:120px;height:9.2px;text-align:center;"><span style="display:inline-block;background:#4aa84c;color:#fff;border-radius:1.6px;padding:0 4px;font-size:6.25px;line-height:9.2px;height:9.2px;white-space:nowrap;vertical-align:top">Completed</span></div>
<div style="position:absolute;left:36px;top:191.45000000000002px;width:319.5px;height:0.7px;background:#e3e3e3;"></div>
<div style="position:absolute;left:127.2px;top:176.5px;width:1px;height:15.300000000000011px;background:#e3e3e3;"></div>
<div style="position:absolute;left:172.9px;top:176.5px;width:1px;height:15.300000000000011px;background:#e3e3e3;"></div>
<div style="position:absolute;left:210.4px;top:176.5px;width:1px;height:15.300000000000011px;background:#e3e3e3;"></div>
<div style="position:absolute;left:260.0px;top:176.5px;width:1px;height:15.300000000000011px;background:#e3e3e3;"></div>
<div style="position:absolute;left:295.8px;top:176.5px;width:1px;height:15.300000000000011px;background:#e3e3e3;"></div>
<div style="position:absolute;left:44px;top:178.0px;width:83.3px;height:12.5px;overflow:hidden;font-size:6.25px;line-height:12.5px;color:#111;font-weight:400;white-space:nowrap;">Business Requirements</div>
<div style="position:absolute;left:50.55000000000001px;top:178.0px;width:200px;height:12.5px;font-size:6.25px;line-height:12.5px;color:#111;font-weight:400;text-align:center;white-space:nowrap;">4/23/2021</div>
<div style="position:absolute;left:174.2px;top:178.0px;width:36.6px;height:12.5px;overflow:hidden;text-align:center;font-size:6.25px;line-height:12.5px;color:#111;font-weight:400;white-space:nowrap;"><span style="display:inline-block;width:200px;margin-left:-81.7px">8/2/2021</span></div>
<div style="position:absolute;left:135.7px;top:178.0px;width:200px;height:12.5px;font-size:6.25px;line-height:12.5px;color:#111;font-weight:400;text-align:center;white-space:nowrap;">72d</div>
<svg style="position:absolute;left:275.7px;top:181.05px;overflow:visible;" width="6.4" height="6.4" viewBox="0 0 6.4 6.4"><circle cx="3.2" cy="3.2" r="3.2" fill="#7bbf31"/></svg>
<div style="position:absolute;left:266.2px;top:179.65px;width:120px;height:9.2px;text-align:center;"><span style="display:inline-block;background:#4aa84c;color:#fff;border-radius:1.6px;padding:0 4px;font-size:6.25px;line-height:9.2px;height:9.2px;white-space:nowrap;vertical-align:top">Completed</span></div>
<div style="position:absolute;left:36px;top:206.65px;width:319.5px;height:0.7px;background:#e3e3e3;"></div>
<div style="position:absolute;left:127.2px;top:191.8px;width:1px;height:15.199999999999989px;background:#e3e3e3;"></div>
<div style="position:absolute;left:172.9px;top:191.8px;width:1px;height:15.199999999999989px;background:#e3e3e3;"></div>
<div style="position:absolute;left:210.4px;top:191.8px;width:1px;height:15.199999999999989px;background:#e3e3e3;"></div>
<div style="position:absolute;left:260.0px;top:191.8px;width:1px;height:15.199999999999989px;background:#e3e3e3;"></div>
<div style="position:absolute;left:295.8px;top:191.8px;width:1px;height:15.199999999999989px;background:#e3e3e3;"></div>
<div style="position:absolute;left:43.7px;top:195.9px;width:4.6px;height:5.6px;background:#e0e0e0;border:0.5px solid #c8c8c8;box-sizing:border-box;"></div>
<div style="position:absolute;left:44.5px;top:198.4px;width:3px;height:0.75px;background:#555;"></div>
<div style="position:absolute;left:50px;top:193.25px;width:77.3px;height:12.5px;overflow:hidden;font-size:6.25px;line-height:12.5px;color:#111;font-weight:400;white-space:nowrap;">Launch Schedule</div>
<div style="position:absolute;left:50.55000000000001px;top:193.25px;width:200px;height:12.5px;font-size:6.25px;line-height:12.5px;color:#111;font-weight:400;text-align:center;white-space:nowrap;">8/6/2021</div>
<div style="position:absolute;left:174.2px;top:193.25px;width:36.6px;height:12.5px;overflow:hidden;text-align:center;font-size:6.25px;line-height:12.5px;color:#111;font-weight:400;white-space:nowrap;"><span style="display:inline-block;width:200px;margin-left:-81.7px">2/22/2022</span></div>
<div style="position:absolute;left:135.7px;top:193.25px;width:200px;height:12.5px;font-size:6.25px;line-height:12.5px;color:#111;font-weight:400;text-align:center;white-space:nowrap;">143d</div>
<svg style="position:absolute;left:275.7px;top:196.3px;overflow:visible;" width="6.4" height="6.4" viewBox="0 0 6.4 6.4"><circle cx="3.2" cy="3.2" r="3.2" fill="#fcaa12"/></svg>
<div style="position:absolute;left:266.2px;top:194.9px;width:120px;height:9.2px;text-align:center;"><span style="display:inline-block;background:#18a1f0;color:#fff;border-radius:1.6px;padding:0 4px;font-size:6.25px;line-height:9.2px;height:9.2px;white-space:nowrap;vertical-align:top">In Progress</span></div>
<div style="position:absolute;left:36px;top:221.75px;width:319.5px;height:0.7px;background:#e3e3e3;"></div>
<div style="position:absolute;left:127.2px;top:207px;width:1px;height:15.099999999999994px;background:#e3e3e3;"></div>
<div style="position:absolute;left:172.9px;top:207px;width:1px;height:15.099999999999994px;background:#e3e3e3;"></div>
<div style="position:absolute;left:210.4px;top:207px;width:1px;height:15.099999999999994px;background:#e3e3e3;"></div>
<div style="position:absolute;left:260.0px;top:207px;width:1px;height:15.099999999999994px;background:#e3e3e3;"></div>
<div style="position:absolute;left:295.8px;top:207px;width:1px;height:15.099999999999994px;background:#e3e3e3;"></div>
<div style="position:absolute;left:50px;top:208.4px;width:77.3px;height:12.5px;overflow:hidden;font-size:6.25px;line-height:12.5px;color:#111;font-weight:400;white-space:nowrap;">Launch Event Plan</div>
<div style="position:absolute;left:50.55000000000001px;top:208.4px;width:200px;height:12.5px;font-size:6.25px;line-height:12.5px;color:#111;font-weight:400;text-align:center;white-space:nowrap;">8/6/2021</div>
<div style="position:absolute;left:174.2px;top:208.4px;width:36.6px;height:12.5px;overflow:hidden;text-align:center;font-size:6.25px;line-height:12.5px;color:#111;font-weight:400;white-space:nowrap;"><span style="display:inline-block;width:200px;margin-left:-81.7px">2/22/2022</span></div>
<div style="position:absolute;left:135.7px;top:208.4px;width:200px;height:12.5px;font-size:6.25px;line-height:12.5px;color:#111;font-weight:400;text-align:center;white-space:nowrap;">143d</div>
<svg style="position:absolute;left:275.7px;top:211.45000000000002px;overflow:visible;" width="6.4" height="6.4" viewBox="0 0 6.4 6.4"><circle cx="3.2" cy="3.2" r="3.2" fill="#fcaa12"/></svg>
<div style="position:absolute;left:266.2px;top:210.05px;width:120px;height:9.2px;text-align:center;"><span style="display:inline-block;background:#18a1f0;color:#fff;border-radius:1.6px;padding:0 4px;font-size:6.25px;line-height:9.2px;height:9.2px;white-space:nowrap;vertical-align:top">In Progress</span></div>
<div style="position:absolute;left:36px;top:222.1px;width:319.5px;height:15.099999999999994px;background:#e3f0fb;"></div>
<div style="position:absolute;left:36px;top:236.85px;width:319.5px;height:0.7px;background:#e3e3e3;"></div>
<div style="position:absolute;left:127.2px;top:222.1px;width:1px;height:15.099999999999994px;background:#e3e3e3;"></div>
<div style="position:absolute;left:172.9px;top:222.1px;width:1px;height:15.099999999999994px;background:#e3e3e3;"></div>
<div style="position:absolute;left:210.4px;top:222.1px;width:1px;height:15.099999999999994px;background:#e3e3e3;"></div>
<div style="position:absolute;left:260.0px;top:222.1px;width:1px;height:15.099999999999994px;background:#e3e3e3;"></div>
<div style="position:absolute;left:295.8px;top:222.1px;width:1px;height:15.099999999999994px;background:#e3e3e3;"></div>
<div style="position:absolute;left:38.0px;top:226.14999999999998px;width:4.6px;height:5.6px;background:#e0e0e0;border:0.5px solid #c8c8c8;box-sizing:border-box;"></div>
<div style="position:absolute;left:38.8px;top:228.64999999999998px;width:3px;height:0.75px;background:#555;"></div>
<div style="position:absolute;left:44px;top:223.49999999999997px;width:83.3px;height:12.5px;overflow:hidden;font-size:6.25px;line-height:12.5px;color:#111;font-weight:700;white-space:nowrap;-webkit-text-stroke:0.12px #111;">Marketing Plan</div>
<div style="position:absolute;left:50.55000000000001px;top:223.49999999999997px;width:200px;height:12.5px;font-size:6.25px;line-height:12.5px;color:#111;font-weight:700;text-align:center;white-space:nowrap;-webkit-text-stroke:0.12px #111;">4/27/2021</div>
<div style="position:absolute;left:174.2px;top:223.49999999999997px;width:36.6px;height:12.5px;overflow:hidden;text-align:center;font-size:6.25px;line-height:12.5px;color:#111;font-weight:700;white-space:nowrap;-webkit-text-stroke:0.12px #111;"><span style="display:inline-block;width:200px;margin-left:-81.7px">10/4/2022</span></div>
<div style="position:absolute;left:135.7px;top:223.49999999999997px;width:200px;height:12.5px;font-size:6.25px;line-height:12.5px;color:#111;font-weight:700;text-align:center;white-space:nowrap;-webkit-text-stroke:0.12px #111;">376d</div>
<svg style="position:absolute;left:275.7px;top:226.54999999999998px;overflow:visible;" width="6.4" height="6.4" viewBox="0 0 6.4 6.4"><circle cx="3.2" cy="3.2" r="3.2" fill="#7bbf31"/></svg>
<div style="position:absolute;left:266.2px;top:225.14999999999998px;width:120px;height:9.2px;text-align:center;"><span style="display:inline-block;background:#18a1f0;color:#fff;border-radius:1.6px;padding:0 4px;font-size:6.25px;line-height:9.2px;height:9.2px;white-space:nowrap;vertical-align:top">In Progress</span></div>
<div style="position:absolute;left:36px;top:251.95000000000002px;width:319.5px;height:0.7px;background:#e3e3e3;"></div>
<div style="position:absolute;left:127.2px;top:237.2px;width:1px;height:15.100000000000023px;background:#e3e3e3;"></div>
<div style="position:absolute;left:172.9px;top:237.2px;width:1px;height:15.100000000000023px;background:#e3e3e3;"></div>
<div style="position:absolute;left:210.4px;top:237.2px;width:1px;height:15.100000000000023px;background:#e3e3e3;"></div>
<div style="position:absolute;left:260.0px;top:237.2px;width:1px;height:15.100000000000023px;background:#e3e3e3;"></div>
<div style="position:absolute;left:295.8px;top:237.2px;width:1px;height:15.100000000000023px;background:#e3e3e3;"></div>
<div style="position:absolute;left:44px;top:238.6px;width:83.3px;height:12.5px;overflow:hidden;font-size:6.25px;line-height:12.5px;color:#111;font-weight:400;white-space:nowrap;">Product Strategy</div>
<div style="position:absolute;left:50.55000000000001px;top:238.6px;width:200px;height:12.5px;font-size:6.25px;line-height:12.5px;color:#111;font-weight:400;text-align:center;white-space:nowrap;">4/27/2021</div>
<div style="position:absolute;left:174.2px;top:238.6px;width:36.6px;height:12.5px;overflow:hidden;text-align:center;font-size:6.25px;line-height:12.5px;color:#111;font-weight:400;white-space:nowrap;"><span style="display:inline-block;width:200px;margin-left:-81.7px">8/10/2021</span></div>
<div style="position:absolute;left:135.7px;top:238.6px;width:200px;height:12.5px;font-size:6.25px;line-height:12.5px;color:#111;font-weight:400;text-align:center;white-space:nowrap;">76d</div>
<svg style="position:absolute;left:275.7px;top:241.65px;overflow:visible;" width="6.4" height="6.4" viewBox="0 0 6.4 6.4"><circle cx="3.2" cy="3.2" r="3.2" fill="#fcaa12"/></svg>
<div style="position:absolute;left:266.2px;top:240.25px;width:120px;height:9.2px;text-align:center;"><span style="display:inline-block;background:#fde63b;color:#222;border-radius:1.6px;padding:0 4px;font-size:6.25px;line-height:9.2px;height:9.2px;white-space:nowrap;vertical-align:top">On hold</span></div>
<div style="position:absolute;left:36px;top:267.15px;width:319.5px;height:0.7px;background:#e3e3e3;"></div>
<div style="position:absolute;left:127.2px;top:252.3px;width:1px;height:15.199999999999989px;background:#e3e3e3;"></div>
<div style="position:absolute;left:172.9px;top:252.3px;width:1px;height:15.199999999999989px;background:#e3e3e3;"></div>
<div style="position:absolute;left:210.4px;top:252.3px;width:1px;height:15.199999999999989px;background:#e3e3e3;"></div>
<div style="position:absolute;left:260.0px;top:252.3px;width:1px;height:15.199999999999989px;background:#e3e3e3;"></div>
<div style="position:absolute;left:295.8px;top:252.3px;width:1px;height:15.199999999999989px;background:#e3e3e3;"></div>
<div style="position:absolute;left:43.7px;top:256.4px;width:4.6px;height:5.6px;background:#e0e0e0;border:0.5px solid #c8c8c8;box-sizing:border-box;"></div>
<div style="position:absolute;left:44.5px;top:258.9px;width:3px;height:0.75px;background:#555;"></div>
<div style="position:absolute;left:50px;top:253.75px;width:77.3px;height:12.5px;overflow:hidden;font-size:6.25px;line-height:12.5px;color:#111;font-weight:400;white-space:nowrap;">Regional Strategies</div>
<div style="position:absolute;left:50.55000000000001px;top:253.75px;width:200px;height:12.5px;font-size:6.25px;line-height:12.5px;color:#111;font-weight:400;text-align:center;white-space:nowrap;">9/23/2021</div>
<div style="position:absolute;left:174.2px;top:253.75px;width:36.6px;height:12.5px;overflow:hidden;text-align:center;font-size:6.25px;line-height:12.5px;color:#111;font-weight:400;white-space:nowrap;"><span style="display:inline-block;width:200px;margin-left:-81.7px">6/2/2022</span></div>
<div style="position:absolute;left:135.7px;top:253.75px;width:200px;height:12.5px;font-size:6.25px;line-height:12.5px;color:#111;font-weight:400;text-align:center;white-space:nowrap;">181d</div>
<svg style="position:absolute;left:275.7px;top:256.8px;overflow:visible;" width="6.4" height="6.4" viewBox="0 0 6.4 6.4"><circle cx="3.2" cy="3.2" r="3.2" fill="#d7191f"/></svg>
<div style="position:absolute;left:266.2px;top:255.4px;width:120px;height:9.2px;text-align:center;"><span style="display:inline-block;background:#8d9fab;color:#fff;border-radius:1.6px;padding:0 4px;font-size:6.25px;line-height:9.2px;height:9.2px;white-space:nowrap;vertical-align:top">Not Started</span></div>
<div style="position:absolute;left:36px;top:277.04999999999995px;width:319.5px;height:0.7px;background:#e3e3e3;"></div>
<div style="position:absolute;left:127.2px;top:267.5px;width:1px;height:9.899999999999977px;background:#e3e3e3;"></div>
<div style="position:absolute;left:172.9px;top:267.5px;width:1px;height:9.899999999999977px;background:#e3e3e3;"></div>
<div style="position:absolute;left:210.4px;top:267.5px;width:1px;height:9.899999999999977px;background:#e3e3e3;"></div>
<div style="position:absolute;left:260.0px;top:267.5px;width:1px;height:9.899999999999977px;background:#e3e3e3;"></div>
<div style="position:absolute;left:295.8px;top:267.5px;width:1px;height:9.899999999999977px;background:#e3e3e3;"></div>
<div style="position:absolute;left:50px;top:266.3px;width:77.3px;height:12.5px;overflow:hidden;font-size:6.25px;line-height:12.5px;color:#111;font-weight:400;white-space:nowrap;">Regional Pricing Plans</div>
<div style="position:absolute;left:50.55000000000001px;top:266.3px;width:200px;height:12.5px;font-size:6.25px;line-height:12.5px;color:#111;font-weight:400;text-align:center;white-space:nowrap;">3/7/2022</div>
<div style="position:absolute;left:174.2px;top:266.3px;width:36.6px;height:12.5px;overflow:hidden;text-align:center;font-size:6.25px;line-height:12.5px;color:#111;font-weight:400;white-space:nowrap;"><span style="display:inline-block;width:200px;margin-left:-81.7px">6/2/2022</span></div>
<div style="position:absolute;left:135.7px;top:266.3px;width:200px;height:12.5px;font-size:6.25px;line-height:12.5px;color:#111;font-weight:400;text-align:center;white-space:nowrap;">64d</div>
<svg style="position:absolute;left:275.7px;top:269.35px;overflow:visible;" width="6.4" height="6.4" viewBox="0 0 6.4 6.4"><circle cx="3.2" cy="3.2" r="3.2" fill="#fcaa12"/></svg>
<div style="position:absolute;left:266.2px;top:267.95px;width:120px;height:9.2px;text-align:center;"><span style="display:inline-block;background:#ee3838;color:#fff;border-radius:1.6px;padding:0 4px;font-size:6.25px;line-height:9.2px;height:9.2px;white-space:nowrap;vertical-align:top">Delayed</span></div>
<div style="position:absolute;left:36px;top:291.84999999999997px;width:319.5px;height:0.7px;background:#e3e3e3;"></div>
<div style="position:absolute;left:127.2px;top:277.4px;width:1px;height:14.800000000000011px;background:#e3e3e3;"></div>
<div style="position:absolute;left:172.9px;top:277.4px;width:1px;height:14.800000000000011px;background:#e3e3e3;"></div>
<div style="position:absolute;left:210.4px;top:277.4px;width:1px;height:14.800000000000011px;background:#e3e3e3;"></div>
<div style="position:absolute;left:260.0px;top:277.4px;width:1px;height:14.800000000000011px;background:#e3e3e3;"></div>
<div style="position:absolute;left:295.8px;top:277.4px;width:1px;height:14.800000000000011px;background:#e3e3e3;"></div>
<div style="position:absolute;left:50px;top:278.65px;width:77.3px;height:12.5px;overflow:hidden;font-size:6.25px;line-height:12.5px;color:#111;font-weight:400;white-space:nowrap;">Regional Packages</div>
<div style="position:absolute;left:50.55000000000001px;top:278.65px;width:200px;height:12.5px;font-size:6.25px;line-height:12.5px;color:#111;font-weight:400;text-align:center;white-space:nowrap;">9/23/2021</div>
<div style="position:absolute;left:174.2px;top:278.65px;width:36.6px;height:12.5px;overflow:hidden;text-align:center;font-size:6.25px;line-height:12.5px;color:#111;font-weight:400;white-space:nowrap;"><span style="display:inline-block;width:200px;margin-left:-81.7px">1/21/2022</span></div>
<div style="position:absolute;left:135.7px;top:278.65px;width:200px;height:12.5px;font-size:6.25px;line-height:12.5px;color:#111;font-weight:400;text-align:center;white-space:nowrap;">87d</div>
<svg style="position:absolute;left:275.7px;top:281.7px;overflow:visible;" width="6.4" height="6.4" viewBox="0 0 6.4 6.4"><circle cx="3.2" cy="3.2" r="3.2" fill="#7bbf31"/></svg>
<div style="position:absolute;left:266.2px;top:280.29999999999995px;width:120px;height:9.2px;text-align:center;"><span style="display:inline-block;background:#18a1f0;color:#fff;border-radius:1.6px;padding:0 4px;font-size:6.25px;line-height:9.2px;height:9.2px;white-space:nowrap;vertical-align:top">In Progress</span></div>
<div style="position:absolute;left:36px;top:307.65px;width:319.5px;height:0.7px;background:#e3e3e3;"></div>
<div style="position:absolute;left:127.2px;top:292.2px;width:1px;height:15.800000000000011px;background:#e3e3e3;"></div>
<div style="position:absolute;left:172.9px;top:292.2px;width:1px;height:15.800000000000011px;background:#e3e3e3;"></div>
<div style="position:absolute;left:210.4px;top:292.2px;width:1px;height:15.800000000000011px;background:#e3e3e3;"></div>
<div style="position:absolute;left:260.0px;top:292.2px;width:1px;height:15.800000000000011px;background:#e3e3e3;"></div>
<div style="position:absolute;left:295.8px;top:292.2px;width:1px;height:15.800000000000011px;background:#e3e3e3;"></div>
<div style="position:absolute;left:44px;top:293.95000000000005px;width:83.3px;height:12.5px;overflow:hidden;font-size:6.25px;line-height:12.5px;color:#111;font-weight:400;white-space:nowrap;">Investment Review</div>
<div style="position:absolute;left:50.55000000000001px;top:293.95000000000005px;width:200px;height:12.5px;font-size:6.25px;line-height:12.5px;color:#111;font-weight:400;text-align:center;white-space:nowrap;">6/17/2022</div>
<div style="position:absolute;left:174.2px;top:293.95000000000005px;width:36.6px;height:12.5px;overflow:hidden;text-align:center;font-size:6.25px;line-height:12.5px;color:#111;font-weight:400;white-space:nowrap;"><span style="display:inline-block;width:200px;margin-left:-81.7px">10/4/2022</span></div>
<div style="position:absolute;left:135.7px;top:293.95000000000005px;width:200px;height:12.5px;font-size:6.25px;line-height:12.5px;color:#111;font-weight:400;text-align:center;white-space:nowrap;">78d</div>
<svg style="position:absolute;left:275.7px;top:297.00000000000006px;overflow:visible;" width="6.4" height="6.4" viewBox="0 0 6.4 6.4"><circle cx="3.2" cy="3.2" r="3.2" fill="#7bbf31"/></svg>
<div style="position:absolute;left:266.2px;top:295.6px;width:120px;height:9.2px;text-align:center;"><span style="display:inline-block;background:#8d9fab;color:#fff;border-radius:1.6px;padding:0 4px;font-size:6.25px;line-height:9.2px;height:9.2px;white-space:nowrap;vertical-align:top">Not Started</span></div>
<svg style="position:absolute;left:99px;top:297.50000000000006px;overflow:visible;" width="8" height="5.2" viewBox="0 0 8 5.2"><rect x="0" y="0" width="8" height="5.2" rx="0.6" fill="#b9b8a8"/><rect x="2" y="0" width="3.2" height="5.2" fill="#eec52e"/><rect x="3.2" y="0.5" width="0.8" height="4.2" fill="#a88a1a"/></svg>
<div style="position:absolute;left:36px;top:322.95px;width:319.5px;height:0.7px;background:#e3e3e3;"></div>
<div style="position:absolute;left:127.2px;top:308px;width:1px;height:15.300000000000011px;background:#e3e3e3;"></div>
<div style="position:absolute;left:172.9px;top:308px;width:1px;height:15.300000000000011px;background:#e3e3e3;"></div>
<div style="position:absolute;left:210.4px;top:308px;width:1px;height:15.300000000000011px;background:#e3e3e3;"></div>
<div style="position:absolute;left:260.0px;top:308px;width:1px;height:15.300000000000011px;background:#e3e3e3;"></div>
<div style="position:absolute;left:295.8px;top:308px;width:1px;height:15.300000000000011px;background:#e3e3e3;"></div>
<div style="position:absolute;left:44px;top:309.5px;width:83.3px;height:12.5px;overflow:hidden;font-size:6.25px;line-height:12.5px;color:#111;font-weight:400;white-space:nowrap;">GTM Tactics</div>
<div style="position:absolute;left:50.55000000000001px;top:309.5px;width:200px;height:12.5px;font-size:6.25px;line-height:12.5px;color:#111;font-weight:400;text-align:center;white-space:nowrap;">8/31/2021</div>
<div style="position:absolute;left:174.2px;top:309.5px;width:36.6px;height:12.5px;overflow:hidden;text-align:center;font-size:6.25px;line-height:12.5px;color:#111;font-weight:400;white-space:nowrap;"><span style="display:inline-block;width:200px;margin-left:-81.7px">12/20/2021</span></div>
<div style="position:absolute;left:135.7px;top:309.5px;width:200px;height:12.5px;font-size:6.25px;line-height:12.5px;color:#111;font-weight:400;text-align:center;white-space:nowrap;">80d</div>
<svg style="position:absolute;left:275.7px;top:312.55px;overflow:visible;" width="6.4" height="6.4" viewBox="0 0 6.4 6.4"><circle cx="3.2" cy="3.2" r="3.2" fill="#7bbf31"/></svg>
<div style="position:absolute;left:266.2px;top:311.15px;width:120px;height:9.2px;text-align:center;"><span style="display:inline-block;background:#8d9fab;color:#fff;border-radius:1.6px;padding:0 4px;font-size:6.25px;line-height:9.2px;height:9.2px;white-space:nowrap;vertical-align:top">Not Started</span></div>
<div style="position:absolute;left:36px;top:323.3px;width:319.5px;height:15.300000000000011px;background:#e3f0fb;"></div>
<div style="position:absolute;left:36px;top:338.25px;width:319.5px;height:0.7px;background:#e3e3e3;"></div>
<div style="position:absolute;left:127.2px;top:323.3px;width:1px;height:15.300000000000011px;background:#e3e3e3;"></div>
<div style="position:absolute;left:172.9px;top:323.3px;width:1px;height:15.300000000000011px;background:#e3e3e3;"></div>
<div style="position:absolute;left:210.4px;top:323.3px;width:1px;height:15.300000000000011px;background:#e3e3e3;"></div>
<div style="position:absolute;left:260.0px;top:323.3px;width:1px;height:15.300000000000011px;background:#e3e3e3;"></div>
<div style="position:absolute;left:295.8px;top:323.3px;width:1px;height:15.300000000000011px;background:#e3e3e3;"></div>
<div style="position:absolute;left:38.0px;top:327.45000000000005px;width:4.6px;height:5.6px;background:#e0e0e0;border:0.5px solid #c8c8c8;box-sizing:border-box;"></div>
<div style="position:absolute;left:38.8px;top:329.95000000000005px;width:3px;height:0.75px;background:#555;"></div>
<div style="position:absolute;left:44px;top:324.80000000000007px;width:83.3px;height:12.5px;overflow:hidden;font-size:6.25px;line-height:12.5px;color:#111;font-weight:700;white-space:nowrap;-webkit-text-stroke:0.12px #111;">Marketing Materials Plan</div>
<div style="position:absolute;left:50.55000000000001px;top:324.80000000000007px;width:200px;height:12.5px;font-size:6.25px;line-height:12.5px;color:#111;font-weight:700;text-align:center;white-space:nowrap;-webkit-text-stroke:0.12px #111;">9/24/2021</div>
<div style="position:absolute;left:174.2px;top:324.80000000000007px;width:36.6px;height:12.5px;overflow:hidden;text-align:center;font-size:6.25px;line-height:12.5px;color:#111;font-weight:700;white-space:nowrap;-webkit-text-stroke:0.12px #111;"><span style="display:inline-block;width:200px;margin-left:-81.7px">10/24/2022</span></div>
<div style="position:absolute;left:135.7px;top:324.80000000000007px;width:200px;height:12.5px;font-size:6.25px;line-height:12.5px;color:#111;font-weight:700;text-align:center;white-space:nowrap;-webkit-text-stroke:0.12px #111;">282d</div>
<svg style="position:absolute;left:275.7px;top:327.8500000000001px;overflow:visible;" width="6.4" height="6.4" viewBox="0 0 6.4 6.4"><circle cx="3.2" cy="3.2" r="3.2" fill="#fcaa12"/></svg>
<div style="position:absolute;left:266.2px;top:326.45000000000005px;width:120px;height:9.2px;text-align:center;"><span style="display:inline-block;background:#18a1f0;color:#fff;border-radius:1.6px;padding:0 4px;font-size:6.25px;line-height:9.2px;height:9.2px;white-space:nowrap;vertical-align:top">In Progress</span></div>
<div style="position:absolute;left:36px;top:353.25px;width:319.5px;height:0.7px;background:#e3e3e3;"></div>
<div style="position:absolute;left:127.2px;top:338.6px;width:1px;height:15.0px;background:#e3e3e3;"></div>
<div style="position:absolute;left:172.9px;top:338.6px;width:1px;height:15.0px;background:#e3e3e3;"></div>
<div style="position:absolute;left:210.4px;top:338.6px;width:1px;height:15.0px;background:#e3e3e3;"></div>
<div style="position:absolute;left:260.0px;top:338.6px;width:1px;height:15.0px;background:#e3e3e3;"></div>
<div style="position:absolute;left:295.8px;top:338.6px;width:1px;height:15.0px;background:#e3e3e3;"></div>
<div style="position:absolute;left:44px;top:339.95000000000005px;width:83.3px;height:12.5px;overflow:hidden;font-size:6.25px;line-height:12.5px;color:#111;font-weight:400;white-space:nowrap;">Datasheets</div>
<div style="position:absolute;left:50.55000000000001px;top:339.95000000000005px;width:200px;height:12.5px;font-size:6.25px;line-height:12.5px;color:#111;font-weight:400;text-align:center;white-space:nowrap;">9/28/2021</div>
<div style="position:absolute;left:174.2px;top:339.95000000000005px;width:36.6px;height:12.5px;overflow:hidden;text-align:center;font-size:6.25px;line-height:12.5px;color:#111;font-weight:400;white-space:nowrap;"><span style="display:inline-block;width:200px;margin-left:-81.7px">11/26/2021</span></div>
<div style="position:absolute;left:135.7px;top:339.95000000000005px;width:200px;height:12.5px;font-size:6.25px;line-height:12.5px;color:#111;font-weight:400;text-align:center;white-space:nowrap;">44d</div>
<svg style="position:absolute;left:275.7px;top:343.00000000000006px;overflow:visible;" width="6.4" height="6.4" viewBox="0 0 6.4 6.4"><circle cx="3.2" cy="3.2" r="3.2" fill="#fcaa12"/></svg>
<div style="position:absolute;left:266.2px;top:341.6px;width:120px;height:9.2px;text-align:center;"><span style="display:inline-block;background:#18a1f0;color:#fff;border-radius:1.6px;padding:0 4px;font-size:6.25px;line-height:9.2px;height:9.2px;white-space:nowrap;vertical-align:top">In Progress</span></div>
<div style="position:absolute;left:36px;top:368.15px;width:319.5px;height:0.7px;background:#e3e3e3;"></div>
<div style="position:absolute;left:127.2px;top:353.6px;width:1px;height:14.899999999999977px;background:#e3e3e3;"></div>
<div style="position:absolute;left:172.9px;top:353.6px;width:1px;height:14.899999999999977px;background:#e3e3e3;"></div>
<div style="position:absolute;left:210.4px;top:353.6px;width:1px;height:14.899999999999977px;background:#e3e3e3;"></div>
<div style="position:absolute;left:260.0px;top:353.6px;width:1px;height:14.899999999999977px;background:#e3e3e3;"></div>
<div style="position:absolute;left:295.8px;top:353.6px;width:1px;height:14.899999999999977px;background:#e3e3e3;"></div>
<div style="position:absolute;left:44px;top:354.90000000000003px;width:83.3px;height:12.5px;overflow:hidden;font-size:6.25px;line-height:12.5px;color:#111;font-weight:400;white-space:nowrap;">ROI Whitepaper</div>
<div style="position:absolute;left:50.55000000000001px;top:354.90000000000003px;width:200px;height:12.5px;font-size:6.25px;line-height:12.5px;color:#111;font-weight:400;text-align:center;white-space:nowrap;">9/24/2021</div>
<div style="position:absolute;left:174.2px;top:354.90000000000003px;width:36.6px;height:12.5px;overflow:hidden;text-align:center;font-size:6.25px;line-height:12.5px;color:#111;font-weight:400;white-space:nowrap;"><span style="display:inline-block;width:200px;margin-left:-81.7px">12/3/2021</span></div>
<div style="position:absolute;left:135.7px;top:354.90000000000003px;width:200px;height:12.5px;font-size:6.25px;line-height:12.5px;color:#111;font-weight:400;text-align:center;white-space:nowrap;">51d</div>
<svg style="position:absolute;left:275.7px;top:357.95000000000005px;overflow:visible;" width="6.4" height="6.4" viewBox="0 0 6.4 6.4"><circle cx="3.2" cy="3.2" r="3.2" fill="#fcaa12"/></svg>
<div style="position:absolute;left:266.2px;top:356.55px;width:120px;height:9.2px;text-align:center;"><span style="display:inline-block;background:#18a1f0;color:#fff;border-radius:1.6px;padding:0 4px;font-size:6.25px;line-height:9.2px;height:9.2px;white-space:nowrap;vertical-align:top">In Progress</span></div>
<div style="position:absolute;left:36px;top:383.15px;width:319.5px;height:0.7px;background:#e3e3e3;"></div>
<div style="position:absolute;left:127.2px;top:368.5px;width:1px;height:15.0px;background:#e3e3e3;"></div>
<div style="position:absolute;left:172.9px;top:368.5px;width:1px;height:15.0px;background:#e3e3e3;"></div>
<div style="position:absolute;left:210.4px;top:368.5px;width:1px;height:15.0px;background:#e3e3e3;"></div>
<div style="position:absolute;left:260.0px;top:368.5px;width:1px;height:15.0px;background:#e3e3e3;"></div>
<div style="position:absolute;left:295.8px;top:368.5px;width:1px;height:15.0px;background:#e3e3e3;"></div>
<div style="position:absolute;left:43.7px;top:372.5px;width:4.6px;height:5.6px;background:#e0e0e0;border:0.5px solid #c8c8c8;box-sizing:border-box;"></div>
<div style="position:absolute;left:44.5px;top:375.0px;width:3px;height:0.75px;background:#555;"></div>
<div style="position:absolute;left:50px;top:369.85px;width:77.3px;height:12.5px;overflow:hidden;font-size:6.25px;line-height:12.5px;color:#111;font-weight:400;white-space:nowrap;">Website Design and Development</div>
<div style="position:absolute;left:50.55000000000001px;top:369.85px;width:200px;height:12.5px;font-size:6.25px;line-height:12.5px;color:#111;font-weight:400;text-align:center;white-space:nowrap;">1/18/2022</div>
<div style="position:absolute;left:174.2px;top:369.85px;width:36.6px;height:12.5px;overflow:hidden;text-align:center;font-size:6.25px;line-height:12.5px;color:#111;font-weight:400;white-space:nowrap;"><span style="display:inline-block;width:200px;margin-left:-81.7px">10/24/2022</span></div>
<div style="position:absolute;left:135.7px;top:369.85px;width:200px;height:12.5px;font-size:6.25px;line-height:12.5px;color:#111;font-weight:400;text-align:center;white-space:nowrap;">200d</div>
<svg style="position:absolute;left:275.7px;top:372.90000000000003px;overflow:visible;" width="6.4" height="6.4" viewBox="0 0 6.4 6.4"><circle cx="3.2" cy="3.2" r="3.2" fill="#fcaa12"/></svg>
<div style="position:absolute;left:266.2px;top:371.5px;width:120px;height:9.2px;text-align:center;"><span style="display:inline-block;background:#8d9fab;color:#fff;border-radius:1.6px;padding:0 4px;font-size:6.25px;line-height:9.2px;height:9.2px;white-space:nowrap;vertical-align:top">Not Started</span></div>
<div style="position:absolute;left:36px;top:398.15px;width:319.5px;height:0.7px;background:#e3e3e3;"></div>
<div style="position:absolute;left:127.2px;top:383.5px;width:1px;height:15.0px;background:#e3e3e3;"></div>
<div style="position:absolute;left:172.9px;top:383.5px;width:1px;height:15.0px;background:#e3e3e3;"></div>
<div style="position:absolute;left:210.4px;top:383.5px;width:1px;height:15.0px;background:#e3e3e3;"></div>
<div style="position:absolute;left:260.0px;top:383.5px;width:1px;height:15.0px;background:#e3e3e3;"></div>
<div style="position:absolute;left:295.8px;top:383.5px;width:1px;height:15.0px;background:#e3e3e3;"></div>
<div style="position:absolute;left:50px;top:384.85px;width:77.3px;height:12.5px;overflow:hidden;font-size:6.25px;line-height:12.5px;color:#111;font-weight:400;white-space:nowrap;">Web &amp; Mobile Site Design</div>
<div style="position:absolute;left:50.55000000000001px;top:384.85px;width:200px;height:12.5px;font-size:6.25px;line-height:12.5px;color:#111;font-weight:400;text-align:center;white-space:nowrap;">1/18/2022</div>
<div style="position:absolute;left:174.2px;top:384.85px;width:36.6px;height:12.5px;overflow:hidden;text-align:center;font-size:6.25px;line-height:12.5px;color:#111;font-weight:400;white-space:nowrap;"><span style="display:inline-block;width:200px;margin-left:-81.7px">5/23/2022</span></div>
<div style="position:absolute;left:135.7px;top:384.85px;width:200px;height:12.5px;font-size:6.25px;line-height:12.5px;color:#111;font-weight:400;text-align:center;white-space:nowrap;">90d</div>
<svg style="position:absolute;left:275.7px;top:387.90000000000003px;overflow:visible;" width="6.4" height="6.4" viewBox="0 0 6.4 6.4"><circle cx="3.2" cy="3.2" r="3.2" fill="#fcaa12"/></svg>
<div style="position:absolute;left:266.2px;top:386.5px;width:120px;height:9.2px;text-align:center;"><span style="display:inline-block;background:#8d9fab;color:#fff;border-radius:1.6px;padding:0 4px;font-size:6.25px;line-height:9.2px;height:9.2px;white-space:nowrap;vertical-align:top">Not Started</span></div>
<div style="position:absolute;left:36px;top:413.15px;width:319.5px;height:0.7px;background:#e3e3e3;"></div>
<div style="position:absolute;left:127.2px;top:398.5px;width:1px;height:15.0px;background:#e3e3e3;"></div>
<div style="position:absolute;left:172.9px;top:398.5px;width:1px;height:15.0px;background:#e3e3e3;"></div>
<div style="position:absolute;left:210.4px;top:398.5px;width:1px;height:15.0px;background:#e3e3e3;"></div>
<div style="position:absolute;left:260.0px;top:398.5px;width:1px;height:15.0px;background:#e3e3e3;"></div>
<div style="position:absolute;left:295.8px;top:398.5px;width:1px;height:15.0px;background:#e3e3e3;"></div>
<div style="position:absolute;left:50px;top:399.85px;width:77.3px;height:12.5px;overflow:hidden;font-size:6.25px;line-height:12.5px;color:#111;font-weight:400;white-space:nowrap;">Web &amp; Mobile Site Development</div>
<div style="position:absolute;left:50.55000000000001px;top:399.85px;width:200px;height:12.5px;font-size:6.25px;line-height:12.5px;color:#111;font-weight:400;text-align:center;white-space:nowrap;">5/24/2022</div>
<div style="position:absolute;left:174.2px;top:399.85px;width:36.6px;height:12.5px;overflow:hidden;text-align:center;font-size:6.25px;line-height:12.5px;color:#111;font-weight:400;white-space:nowrap;"><span style="display:inline-block;width:200px;margin-left:-81.7px">10/24/2022</span></div>
<div style="position:absolute;left:135.7px;top:399.85px;width:200px;height:12.5px;font-size:6.25px;line-height:12.5px;color:#111;font-weight:400;text-align:center;white-space:nowrap;">110d</div>
<svg style="position:absolute;left:275.7px;top:402.90000000000003px;overflow:visible;" width="6.4" height="6.4" viewBox="0 0 6.4 6.4"><circle cx="3.2" cy="3.2" r="3.2" fill="#d7191f"/></svg>
<div style="position:absolute;left:266.2px;top:401.5px;width:120px;height:9.2px;text-align:center;"><span style="display:inline-block;background:#8d9fab;color:#fff;border-radius:1.6px;padding:0 4px;font-size:6.25px;line-height:9.2px;height:9.2px;white-space:nowrap;vertical-align:top">Not Started</span></div>
<div style="position:absolute;left:36px;top:413.5px;width:319.5px;height:14.0px;background:#e3f0fb;"></div>
<div style="position:absolute;left:36px;top:427.15px;width:319.5px;height:0.7px;background:#e3e3e3;"></div>
<div style="position:absolute;left:127.2px;top:413.5px;width:1px;height:14.0px;background:#e3e3e3;"></div>
<div style="position:absolute;left:172.9px;top:413.5px;width:1px;height:14.0px;background:#e3e3e3;"></div>
<div style="position:absolute;left:210.4px;top:413.5px;width:1px;height:14.0px;background:#e3e3e3;"></div>
<div style="position:absolute;left:260.0px;top:413.5px;width:1px;height:14.0px;background:#e3e3e3;"></div>
<div style="position:absolute;left:295.8px;top:413.5px;width:1px;height:14.0px;background:#e3e3e3;"></div>
<div style="position:absolute;left:38.0px;top:417.0px;width:4.6px;height:5.6px;background:#e0e0e0;border:0.5px solid #c8c8c8;box-sizing:border-box;"></div>
<div style="position:absolute;left:38.8px;top:419.5px;width:3px;height:0.75px;background:#555;"></div>
<div style="position:absolute;left:44px;top:414.35px;width:83.3px;height:12.5px;overflow:hidden;font-size:6.25px;line-height:12.5px;color:#111;font-weight:700;white-space:nowrap;-webkit-text-stroke:0.12px #111;">Sales Materials Plan</div>
<div style="position:absolute;left:50.55000000000001px;top:414.35px;width:200px;height:12.5px;font-size:6.25px;line-height:12.5px;color:#111;font-weight:700;text-align:center;white-space:nowrap;-webkit-text-stroke:0.12px #111;">10/6/2021</div>
<div style="position:absolute;left:174.2px;top:414.35px;width:36.6px;height:12.5px;overflow:hidden;text-align:center;font-size:6.25px;line-height:12.5px;color:#111;font-weight:700;white-space:nowrap;-webkit-text-stroke:0.12px #111;"><span style="display:inline-block;width:200px;margin-left:-81.7px">9/21/2022</span></div>
<div style="position:absolute;left:135.7px;top:414.35px;width:200px;height:12.5px;font-size:6.25px;line-height:12.5px;color:#111;font-weight:700;text-align:center;white-space:nowrap;-webkit-text-stroke:0.12px #111;">251d</div>
<svg style="position:absolute;left:275.7px;top:417.40000000000003px;overflow:visible;" width="6.4" height="6.4" viewBox="0 0 6.4 6.4"><circle cx="3.2" cy="3.2" r="3.2" fill="#fcaa12"/></svg>
<div style="position:absolute;left:266.2px;top:416.0px;width:120px;height:9.2px;text-align:center;"><span style="display:inline-block;background:#8d9fab;color:#fff;border-radius:1.6px;padding:0 4px;font-size:6.25px;line-height:9.2px;height:9.2px;white-space:nowrap;vertical-align:top">Not Started</span></div>
<div style="position:absolute;left:260.6px;top:191.6px;width:36.2px;height:15px;border:1px solid #5d90ee;box-sizing:border-box;"></div>
<div style="position:absolute;left:286.9px;top:195.1px;width:7.1px;height:7.5px;background:#dedede;border-radius:0.6px;"></div>
<svg style="position:absolute;left:288.6px;top:197.9px;overflow:visible;" width="3.8" height="2.4" viewBox="0 0 3.8 2.4"><polygon points="0,0 3.8,0 1.9,2.4" fill="#2a2a2a"/></svg>
<div style="position:absolute;left:294.9px;top:205.1px;width:2.6px;height:2.6px;background:#3f7fea;border-radius:1.3px;"></div>
<svg style="position:absolute;left:27.3px;top:196.6px;overflow:visible;" width="6.8" height="6" viewBox="0 0 6.8 6"><line x1="1.2" y1="4.8" x2="5.6" y2="1.2" stroke="#1f7de0" stroke-width="0.9"/><polygon points="0,6 0.2,3.3 2.7,5.6" fill="#1f7de0"/><polygon points="6.8,0 6.6,2.7 4.1,0.4" fill="#1f7de0"/></svg>
<div style="position:absolute;left:355.8px;top:61.3px;width:2.2px;height:371px;background:#e0e0e0;"></div>
<div style="position:absolute;left:358px;top:61.3px;width:242px;height:28.5px;background:#f2f2f2;"></div>
<div style="position:absolute;left:358px;top:75.2px;width:242px;height:0.7px;background:#dedede;"></div>
<div style="position:absolute;left:358px;top:89.6px;width:242px;height:0.7px;background:#d6d6d6;"></div>
<div style="position:absolute;left:358px;top:90.3px;width:242px;height:337.2px;background:#f4f7f9;"></div>
<div style="position:absolute;left:377.5px;top:61.3px;width:0.7px;height:28.5px;background:#dedede;"></div>
<div style="position:absolute;left:514.7px;top:61.3px;width:0.7px;height:28.5px;background:#dedede;"></div>
<div style="position:absolute;left:346.1px;top:62.6px;width:200px;height:11.8px;font-size:5.9px;line-height:11.8px;color:#4a4a4a;font-weight:700;text-align:center;white-space:nowrap;">2021</div>
<div style="position:absolute;left:484.5px;top:62.6px;width:200px;height:11.8px;font-size:5.9px;line-height:11.8px;color:#4a4a4a;font-weight:700;text-align:center;white-space:nowrap;">2022</div>
<div style="position:absolute;left:261.2px;top:76.8px;width:200px;height:11.6px;font-size:5.8px;line-height:11.6px;color:#4a4a4a;font-weight:700;text-align:center;white-space:nowrap;">Q4</div>
<div style="position:absolute;left:294.65px;top:76.8px;width:200px;height:11.6px;font-size:5.8px;line-height:11.6px;color:#4a4a4a;font-weight:700;text-align:center;white-space:nowrap;">Q1</div>
<div style="position:absolute;left:411.8px;top:75.5px;width:0.7px;height:14.3px;background:#dedede;"></div>
<div style="position:absolute;left:328.95px;top:76.8px;width:200px;height:11.6px;font-size:5.8px;line-height:11.6px;color:#4a4a4a;font-weight:700;text-align:center;white-space:nowrap;">Q2</div>
<div style="position:absolute;left:446.1px;top:75.5px;width:0.7px;height:14.3px;background:#dedede;"></div>
<div style="position:absolute;left:363.25px;top:76.8px;width:200px;height:11.6px;font-size:5.8px;line-height:11.6px;color:#4a4a4a;font-weight:700;text-align:center;white-space:nowrap;">Q3</div>
<div style="position:absolute;left:480.4px;top:75.5px;width:0.7px;height:14.3px;background:#dedede;"></div>
<div style="position:absolute;left:397.54999999999995px;top:76.8px;width:200px;height:11.6px;font-size:5.8px;line-height:11.6px;color:#4a4a4a;font-weight:700;text-align:center;white-space:nowrap;">Q4</div>
<div style="position:absolute;left:431.85px;top:76.8px;width:200px;height:11.6px;font-size:5.8px;line-height:11.6px;color:#4a4a4a;font-weight:700;text-align:center;white-space:nowrap;">Q1</div>
<div style="position:absolute;left:549.0px;top:75.5px;width:0.7px;height:14.3px;background:#dedede;"></div>
<div style="position:absolute;left:466.15px;top:76.8px;width:200px;height:11.6px;font-size:5.8px;line-height:11.6px;color:#4a4a4a;font-weight:700;text-align:center;white-space:nowrap;">Q2</div>
<div style="position:absolute;left:583.3px;top:75.5px;width:0.7px;height:14.3px;background:#dedede;"></div>
<div style="position:absolute;left:500.44999999999993px;top:76.8px;width:200px;height:11.6px;font-size:5.8px;line-height:11.6px;color:#4a4a4a;font-weight:700;text-align:center;white-space:nowrap;">Q3</div>
<div style="position:absolute;left:435px;top:88px;width:1.9px;height:2.5px;background:#66c777;"></div>
<svg style="position:absolute;left:434.3px;top:86.6px;overflow:visible;" width="3.4" height="3.4" viewBox="0 0 3.4 3.4"><circle cx="1.7" cy="1.7" r="1.7" fill="#3cab50"/></svg>
<div style="position:absolute;left:358px;top:90.3px;width:242px;height:337.2px;overflow:hidden;"><div style="position:absolute;left:-358px;top:-90.3px;width:600px;height:450px;">
<svg style="position:absolute;left:0px;top:0px;overflow:visible;" width="600" height="450" viewBox="0 0 600 450">
<path d="M424,171.5 L414.8,181.2 Q413.2,184.4 416.5,184.4 L418.6,184.4" fill="none" stroke="#a9b0b5" stroke-width="0.8"/>
<polygon points="420.8,184.4 418.2,182.9 418.2,185.9" fill="#a9b0b5"/>
<path d="M462.5,245 C472,247 469,252 470.2,262 L471.5,330 C472,380 473,400 475,427" fill="none" stroke="#a9b0b5" stroke-width="0.8"/>
<path d="M470.5,268 C470.5,284 472,285.5 476.8,285.5" fill="none" stroke="#a9b0b5" stroke-width="0.8"/>
<polygon points="478,285.5 475,283.8 475,287.2" fill="#a9b0b5"/>
<path d="M523.5,286 C530,285 531,273 538,272.5" fill="none" stroke="#a9b0b5" stroke-width="0.8"/>
<polygon points="540,272.5 537,270.8 537,274.2" fill="#a9b0b5"/>
<path d="M573.8,273 C582,276 577,282 575,290 C574,296 575,300.5 577.5,300.5" fill="none" stroke="#a9b0b5" stroke-width="0.8"/>
<polygon points="579,300.5 576,298.8 576,302.2" fill="#a9b0b5"/>
</svg>
<div style="position:absolute;left:435px;top:90px;width:1.9px;height:337.5px;background:#66c777;"></div>
<svg style="position:absolute;left:0px;top:0px;overflow:visible;" width="600" height="450" viewBox="0 0 600 450">
<path d="M421,169.3 C424,169.5 425,172 425,178 C425,195 416.5,222 415.6,236 C415.3,243 417,245 419.5,245" fill="none" stroke="#de3c8e" stroke-width="0.9"/>
<polygon points="421,245 418,243.2 418,246.8" fill="#de3c8e"/>
<path d="M462.4,245 C466.5,245.5 468,249 467.8,257 C467.5,275 462,293 461.2,304 C460.8,312 463,315 467.5,315" fill="none" stroke="#de3c8e" stroke-width="0.9"/>
<polygon points="469,315 466,313.2 466,316.8" fill="#de3c8e"/>
<path d="M511.8,316 C516,317 517,322 517,330 L516.5,375 C516,388 518,391 519.5,391" fill="none" stroke="#de3c8e" stroke-width="0.9"/>
<polygon points="521,391 518,389.2 518,392.8" fill="#de3c8e"/>
<path d="M570.8,391 C575,392 572,397 568,399 C564,401 564,406 567.5,406" fill="none" stroke="#de3c8e" stroke-width="0.9"/>
<polygon points="569,406 566,404.2 566,407.8" fill="#de3c8e"/>
</svg>
<div style="position:absolute;left:379.3px;top:147.9px;width:156.40000000000003px;height:8.5px;background:#66c7f7;border-radius:1.5px 1.5px 0 0;"></div>
<div style="position:absolute;left:379.3px;top:147.9px;width:145.40000000000003px;height:8.5px;background:#1ba1ef;border-radius:1.5px 0 0 0;"></div>
<svg style="position:absolute;left:379.3px;top:156.4px;overflow:visible;" width="4.5" height="4" viewBox="0 0 4.5 4"><polygon points="0,0 4.5,0 0,4" fill="#1ba1ef"/></svg>
<svg style="position:absolute;left:531.2px;top:156.4px;overflow:visible;" width="4.5" height="4" viewBox="0 0 4.5 4"><polygon points="0,0 4.5,0 4.5,4" fill="#66c7f7"/></svg>
<svg style="position:absolute;left:384.4px;top:148.35px;overflow:visible;" width="7.6" height="7.6" viewBox="0 0 7.6 7.6"><circle cx="3.8" cy="3.8" r="3.8" fill="#b9b1aa"/><path d="M1.3299999999999998,5.13 Q0.76,1.14 3.8,0.95 Q6.46,1.14 6.08,3.8 L4.56,3.04 Q3.04,2.6599999999999997 2.6599999999999997,5.699999999999999z" fill="#4b362b"/><ellipse cx="4.369999999999999" cy="4.18" rx="1.5959999999999999" ry="2.09" fill="#e9d2c0"/><path d="M2.09,6.84 Q3.8,5.51 5.699999999999999,6.84 L4.9399999999999995,7.409999999999999 L3.04,7.409999999999999z" fill="#f2f2f2"/><circle cx="4.369999999999999" cy="6.6499999999999995" r="0.76" fill="#1f6f66"/></svg>
<div style="position:absolute;left:394.2px;top:146.25000000000003px;height:11.4px;font-size:5.7px;line-height:11.4px;color:#fff;font-weight:400;white-space:nowrap;">Product Plan</div>
<div style="position:absolute;left:377.79999999999995px;top:162.50000000000003px;width:43.800000000000026px;height:13.899999999999988px;background:#fff;border-radius:3px;opacity:0.9;"></div>
<div style="position:absolute;left:378.4px;top:163.10000000000002px;width:42.60000000000002px;height:12.699999999999989px;background:#4cae50;border:1.5px solid #de3c8e;box-sizing:border-box;border-radius:2.5px;"></div>
<svg style="position:absolute;left:381.4px;top:165.65px;overflow:visible;" width="7.6" height="7.6" viewBox="0 0 7.6 7.6"><circle cx="3.8" cy="3.8" r="3.8" fill="#b9b1aa"/><path d="M1.3299999999999998,5.13 Q0.76,1.14 3.8,0.95 Q6.46,1.14 6.08,3.8 L4.56,3.04 Q3.04,2.6599999999999997 2.6599999999999997,5.699999999999999z" fill="#4b362b"/><ellipse cx="4.369999999999999" cy="4.18" rx="1.5959999999999999" ry="2.09" fill="#e9d2c0"/><path d="M2.09,6.84 Q3.8,5.51 5.699999999999999,6.84 L4.9399999999999995,7.409999999999999 L3.04,7.409999999999999z" fill="#f2f2f2"/><circle cx="4.369999999999999" cy="6.6499999999999995" r="0.76" fill="#1f6f66"/></svg>
<div style="position:absolute;left:392.0px;top:163.35000000000002px;height:11.4px;font-size:5.7px;line-height:11.4px;color:#404040;font-weight:400;white-space:nowrap;">Product Use Case Definition</div>
<div style="position:absolute;left:420.6px;top:178.3px;width:37.39999999999998px;height:12.800000000000011px;background:#4cae50;border-radius:2px;"></div>
<svg style="position:absolute;left:423.6px;top:180.9px;overflow:visible;" width="7.6" height="7.6" viewBox="0 0 7.6 7.6"><circle cx="3.8" cy="3.8" r="3.8" fill="#2c1a17"/><ellipse cx="3.876" cy="4.104" rx="1.5959999999999999" ry="2.09" fill="#6a3b2b"/><ellipse cx="3.876" cy="3.8" rx="0.836" ry="1.14" fill="#8a5240"/></svg>
<div style="position:absolute;left:434.20000000000005px;top:178.60000000000002px;height:11.4px;font-size:5.7px;line-height:11.4px;color:#404040;font-weight:400;white-space:nowrap;">Business Requirements</div>
<div style="position:absolute;left:460px;top:193.70000000000002px;width:75.70000000000005px;height:8.5px;background:#66c7f7;border-radius:1.5px 1.5px 0 0;"></div>
<div style="position:absolute;left:460px;top:193.70000000000002px;width:64.70000000000005px;height:8.5px;background:#1ba1ef;border-radius:1.5px 0 0 0;"></div>
<svg style="position:absolute;left:460px;top:202.20000000000002px;overflow:visible;" width="4.5" height="4" viewBox="0 0 4.5 4"><polygon points="0,0 4.5,0 0,4" fill="#1ba1ef"/></svg>
<svg style="position:absolute;left:531.2px;top:202.20000000000002px;overflow:visible;" width="4.5" height="4" viewBox="0 0 4.5 4"><polygon points="0,0 4.5,0 4.5,4" fill="#66c7f7"/></svg>
<svg style="position:absolute;left:465.09999999999997px;top:194.15px;overflow:visible;" width="7.6" height="7.6" viewBox="0 0 7.6 7.6"><circle cx="3.8" cy="3.8" r="3.8" fill="#b9b1aa"/><path d="M1.3299999999999998,5.13 Q0.76,1.14 3.8,0.95 Q6.46,1.14 6.08,3.8 L4.56,3.04 Q3.04,2.6599999999999997 2.6599999999999997,5.699999999999999z" fill="#4b362b"/><ellipse cx="4.369999999999999" cy="4.18" rx="1.5959999999999999" ry="2.09" fill="#e9d2c0"/><path d="M2.09,6.84 Q3.8,5.51 5.699999999999999,6.84 L4.9399999999999995,7.409999999999999 L3.04,7.409999999999999z" fill="#f2f2f2"/><circle cx="4.369999999999999" cy="6.6499999999999995" r="0.76" fill="#1f6f66"/></svg>
<div style="position:absolute;left:474.9px;top:192.05000000000004px;height:11.4px;font-size:5.7px;line-height:11.4px;color:#fff;font-weight:400;white-space:nowrap;">Launch Schedule</div>
<div style="position:absolute;left:460px;top:208.8px;width:75.70000000000005px;height:12.599999999999994px;background:#66c7f7;border-radius:2px;"></div>
<div style="position:absolute;left:460px;top:208.8px;width:64.70000000000005px;height:12.599999999999994px;background:#1ba1ef;border-radius:2px 0 0 2px;"></div>
<svg style="position:absolute;left:463.0px;top:211.3px;overflow:visible;" width="7.6" height="7.6" viewBox="0 0 7.6 7.6"><circle cx="3.8" cy="3.8" r="3.8" fill="#b9b1aa"/><path d="M1.3299999999999998,5.13 Q0.76,1.14 3.8,0.95 Q6.46,1.14 6.08,3.8 L4.56,3.04 Q3.04,2.6599999999999997 2.6599999999999997,5.699999999999999z" fill="#4b362b"/><ellipse cx="4.369999999999999" cy="4.18" rx="1.5959999999999999" ry="2.09" fill="#e9d2c0"/><path d="M2.09,6.84 Q3.8,5.51 5.699999999999999,6.84 L4.9399999999999995,7.409999999999999 L3.04,7.409999999999999z" fill="#f2f2f2"/><circle cx="4.369999999999999" cy="6.6499999999999995" r="0.76" fill="#1f6f66"/></svg>
<div style="position:absolute;left:473.6px;top:209.00000000000003px;height:11.4px;font-size:5.7px;line-height:11.4px;color:#fff;font-weight:400;white-space:nowrap;">Launch Event Plan</div>
<div style="position:absolute;left:421.6px;top:224.0px;width:188.39999999999998px;height:8.5px;background:#66c7f7;border-radius:1.5px 1.5px 0 0;"></div>
<div style="position:absolute;left:421.6px;top:224.0px;width:52.39999999999998px;height:8.5px;background:#1ba1ef;border-radius:1.5px 0 0 0;"></div>
<svg style="position:absolute;left:421.6px;top:232.5px;overflow:visible;" width="4.5" height="4" viewBox="0 0 4.5 4"><polygon points="0,0 4.5,0 0,4" fill="#1ba1ef"/></svg>
<svg style="position:absolute;left:426.7px;top:224.45px;overflow:visible;" width="7.6" height="7.6" viewBox="0 0 7.6 7.6"><circle cx="3.8" cy="3.8" r="3.8" fill="#b9b1aa"/><path d="M1.3299999999999998,5.13 Q0.76,1.14 3.8,0.95 Q6.46,1.14 6.08,3.8 L4.56,3.04 Q3.04,2.6599999999999997 2.6599999999999997,5.699999999999999z" fill="#4b362b"/><ellipse cx="4.369999999999999" cy="4.18" rx="1.5959999999999999" ry="2.09" fill="#e9d2c0"/><path d="M2.09,6.84 Q3.8,5.51 5.699999999999999,6.84 L4.9399999999999995,7.409999999999999 L3.04,7.409999999999999z" fill="#f2f2f2"/><circle cx="4.369999999999999" cy="6.6499999999999995" r="0.76" fill="#1f6f66"/></svg>
<div style="position:absolute;left:436.5px;top:222.35000000000002px;height:11.4px;font-size:5.7px;line-height:11.4px;color:#fff;font-weight:400;white-space:nowrap;">Marketing Plan</div>
<div style="position:absolute;left:420.4px;top:238.4px;width:42.59999999999998px;height:13.800000000000022px;background:#fff;border-radius:3px;opacity:0.9;"></div>
<div style="position:absolute;left:421px;top:239.0px;width:41.39999999999998px;height:12.600000000000023px;background:#fff27a;border:1.5px solid #de3c8e;box-sizing:border-box;border-radius:2.5px;"></div>
<svg style="position:absolute;left:424.0px;top:241.5px;overflow:visible;" width="7.6" height="7.6" viewBox="0 0 7.6 7.6"><circle cx="3.8" cy="3.8" r="3.8" fill="#2c1a17"/><ellipse cx="3.876" cy="4.104" rx="1.5959999999999999" ry="2.09" fill="#6a3b2b"/><ellipse cx="3.876" cy="3.8" rx="0.836" ry="1.14" fill="#8a5240"/></svg>
<div style="position:absolute;left:434.6px;top:239.20000000000002px;height:11.4px;font-size:5.7px;line-height:11.4px;color:#404040;font-weight:400;white-space:nowrap;">Product Strategy</div>
<div style="position:absolute;left:478px;top:254.20000000000002px;width:95.60000000000002px;height:8.5px;background:#c6d0d6;border-radius:1.5px 1.5px 0 0;"></div>
<div style="position:absolute;left:478px;top:254.20000000000002px;width:47px;height:8.5px;background:#afbcc4;border-radius:1.5px 0 0 0;"></div>
<svg style="position:absolute;left:478px;top:262.70000000000005px;overflow:visible;" width="4.5" height="4" viewBox="0 0 4.5 4"><polygon points="0,0 4.5,0 0,4" fill="#afbcc4"/></svg>
<svg style="position:absolute;left:569.1px;top:262.70000000000005px;overflow:visible;" width="4.5" height="4" viewBox="0 0 4.5 4"><polygon points="0,0 4.5,0 4.5,4" fill="#c6d0d6"/></svg>
<svg style="position:absolute;left:483.09999999999997px;top:254.65000000000003px;overflow:visible;" width="7.6" height="7.6" viewBox="0 0 7.6 7.6"><circle cx="3.8" cy="3.8" r="3.8" fill="#2c1a17"/><ellipse cx="3.876" cy="4.104" rx="1.5959999999999999" ry="2.09" fill="#6a3b2b"/><ellipse cx="3.876" cy="3.8" rx="0.836" ry="1.14" fill="#8a5240"/></svg>
<div style="position:absolute;left:492.9px;top:252.55000000000007px;height:11.4px;font-size:5.7px;line-height:11.4px;color:#fff;font-weight:400;white-space:nowrap;">Regional Strategies</div>
<div style="position:absolute;left:540.5px;top:269.3px;width:33.10000000000002px;height:8.0px;background:#f3877f;border-radius:2px;"></div>
<div style="position:absolute;left:540.5px;top:269.3px;width:10.5px;height:8.0px;background:#f4574e;border-radius:2px 0 0 2px;"></div>
<svg style="position:absolute;left:543.5px;top:269.5px;overflow:visible;" width="7.6" height="7.6" viewBox="0 0 7.6 7.6"><circle cx="3.8" cy="3.8" r="3.8" fill="#2c1a17"/><ellipse cx="3.876" cy="4.104" rx="1.5959999999999999" ry="2.09" fill="#6a3b2b"/><ellipse cx="3.876" cy="3.8" rx="0.836" ry="1.14" fill="#8a5240"/></svg>
<div style="position:absolute;left:554.1px;top:267.20000000000005px;height:11.4px;font-size:5.7px;line-height:11.4px;color:#404040;font-weight:400;white-space:nowrap;">Regional Pricing Plans</div>
<div style="position:absolute;left:478px;top:279.2px;width:45.5px;height:12.300000000000011px;background:#66c7f7;border-radius:2px;"></div>
<div style="position:absolute;left:478px;top:279.2px;width:34.5px;height:12.300000000000011px;background:#1ba1ef;border-radius:2px 0 0 2px;"></div>
<svg style="position:absolute;left:481.0px;top:281.55px;overflow:visible;" width="7.6" height="7.6" viewBox="0 0 7.6 7.6"><circle cx="3.8" cy="3.8" r="3.8" fill="#2c1a17"/><ellipse cx="3.876" cy="4.104" rx="1.5959999999999999" ry="2.09" fill="#6a3b2b"/><ellipse cx="3.876" cy="3.8" rx="0.836" ry="1.14" fill="#8a5240"/></svg>
<div style="position:absolute;left:491.6px;top:279.25000000000006px;height:11.4px;font-size:5.7px;line-height:11.4px;color:#404040;font-weight:400;white-space:nowrap;">Regional Packages</div>
<div style="position:absolute;left:579px;top:294.0px;width:61px;height:13.300000000000011px;background:#c6d0d6;border-radius:2px;"></div>
<svg style="position:absolute;left:582.0px;top:296.84999999999997px;overflow:visible;" width="7.6" height="7.6" viewBox="0 0 7.6 7.6"><circle cx="3.8" cy="3.8" r="3.8" fill="#2c1a17"/><ellipse cx="3.876" cy="4.104" rx="1.5959999999999999" ry="2.09" fill="#6a3b2b"/><ellipse cx="3.876" cy="3.8" rx="0.836" ry="1.14" fill="#8a5240"/></svg>
<div style="position:absolute;left:592.6px;top:294.55px;height:11.4px;font-size:5.7px;line-height:11.4px;color:#404040;font-weight:400;white-space:nowrap;">Investment Review</div>
<div style="position:absolute;left:468.4px;top:308.2px;width:44.000000000000014px;height:14.00000000000001px;background:#fff;border-radius:3px;opacity:0.9;"></div>
<div style="position:absolute;left:469px;top:308.8px;width:42.80000000000001px;height:12.800000000000011px;background:#c3ccd2;border:1.5px solid #de3c8e;box-sizing:border-box;border-radius:2.5px;"></div>
<svg style="position:absolute;left:472.0px;top:311.40000000000003px;overflow:visible;" width="7.6" height="7.6" viewBox="0 0 7.6 7.6"><circle cx="3.8" cy="3.8" r="3.8" fill="#b9b1aa"/><path d="M1.3299999999999998,5.13 Q0.76,1.14 3.8,0.95 Q6.46,1.14 6.08,3.8 L4.56,3.04 Q3.04,2.6599999999999997 2.6599999999999997,5.699999999999999z" fill="#4b362b"/><ellipse cx="4.369999999999999" cy="4.18" rx="1.5959999999999999" ry="2.09" fill="#e9d2c0"/><path d="M2.09,6.84 Q3.8,5.51 5.699999999999999,6.84 L4.9399999999999995,7.409999999999999 L3.04,7.409999999999999z" fill="#f2f2f2"/><circle cx="4.369999999999999" cy="6.6499999999999995" r="0.76" fill="#1f6f66"/></svg>
<div style="position:absolute;left:482.6px;top:309.1000000000001px;height:11.4px;font-size:5.7px;line-height:11.4px;color:#404040;font-weight:400;white-space:nowrap;">GTM Tactics</div>
<div style="position:absolute;left:478.2px;top:324.4px;width:131.8px;height:8.5px;background:#66c7f7;border-radius:1.5px 1.5px 0 0;"></div>
<div style="position:absolute;left:478.2px;top:324.4px;width:17.80000000000001px;height:8.5px;background:#1ba1ef;border-radius:1.5px 0 0 0;"></div>
<svg style="position:absolute;left:478.2px;top:332.9px;overflow:visible;" width="4.5" height="4" viewBox="0 0 4.5 4"><polygon points="0,0 4.5,0 0,4" fill="#1ba1ef"/></svg>
<svg style="position:absolute;left:483.29999999999995px;top:324.84999999999997px;overflow:visible;" width="7.6" height="7.6" viewBox="0 0 7.6 7.6"><circle cx="3.8" cy="3.8" r="3.8" fill="#2c1a17"/><ellipse cx="3.876" cy="4.104" rx="1.5959999999999999" ry="2.09" fill="#6a3b2b"/><ellipse cx="3.876" cy="3.8" rx="0.836" ry="1.14" fill="#8a5240"/></svg>
<div style="position:absolute;left:493.09999999999997px;top:322.75px;height:11.4px;font-size:5.7px;line-height:11.4px;color:#fff;font-weight:400;white-space:nowrap;">Marketing Materials Plan</div>
<div style="position:absolute;left:479.8px;top:340.40000000000003px;width:22.899999999999977px;height:12.5px;background:#62c4f6;border-radius:2px;"></div>
<div style="position:absolute;left:479.8px;top:340.40000000000003px;width:18.19999999999999px;height:12.5px;background:#3cb0f2;border-radius:2px 0 0 2px;"></div>
<svg style="position:absolute;left:482.8px;top:342.85px;overflow:visible;" width="7.6" height="7.6" viewBox="0 0 7.6 7.6"><circle cx="3.8" cy="3.8" r="3.8" fill="#b9b1aa"/><path d="M1.3299999999999998,5.13 Q0.76,1.14 3.8,0.95 Q6.46,1.14 6.08,3.8 L4.56,3.04 Q3.04,2.6599999999999997 2.6599999999999997,5.699999999999999z" fill="#4b362b"/><ellipse cx="4.369999999999999" cy="4.18" rx="1.5959999999999999" ry="2.09" fill="#e9d2c0"/><path d="M2.09,6.84 Q3.8,5.51 5.699999999999999,6.84 L4.9399999999999995,7.409999999999999 L3.04,7.409999999999999z" fill="#f2f2f2"/><circle cx="4.369999999999999" cy="6.6499999999999995" r="0.76" fill="#1f6f66"/></svg>
<div style="position:absolute;left:493.40000000000003px;top:340.55000000000007px;height:11.4px;font-size:5.7px;line-height:11.4px;color:#404040;font-weight:400;white-space:nowrap;">Datasheets</div>
<div style="position:absolute;left:478px;top:355.40000000000003px;width:26.80000000000001px;height:12.399999999999977px;background:#62c4f6;border-radius:2px;"></div>
<div style="position:absolute;left:478px;top:355.40000000000003px;width:16px;height:12.399999999999977px;background:#3cb0f2;border-radius:2px 0 0 2px;"></div>
<svg style="position:absolute;left:481.0px;top:357.8px;overflow:visible;" width="7.6" height="7.6" viewBox="0 0 7.6 7.6"><circle cx="3.8" cy="3.8" r="3.8" fill="#b9b1aa"/><path d="M1.3299999999999998,5.13 Q0.76,1.14 3.8,0.95 Q6.46,1.14 6.08,3.8 L4.56,3.04 Q3.04,2.6599999999999997 2.6599999999999997,5.699999999999999z" fill="#4b362b"/><ellipse cx="4.369999999999999" cy="4.18" rx="1.5959999999999999" ry="2.09" fill="#e9d2c0"/><path d="M2.09,6.84 Q3.8,5.51 5.699999999999999,6.84 L4.9399999999999995,7.409999999999999 L3.04,7.409999999999999z" fill="#f2f2f2"/><circle cx="4.369999999999999" cy="6.6499999999999995" r="0.76" fill="#1f6f66"/></svg>
<div style="position:absolute;left:491.6px;top:355.50000000000006px;height:11.4px;font-size:5.7px;line-height:11.4px;color:#404040;font-weight:400;white-space:nowrap;">ROI Whitepaper</div>
<div style="position:absolute;left:522.5px;top:370.4px;width:87.5px;height:8.5px;background:#c6d0d6;border-radius:1.5px 1.5px 0 0;"></div>
<div style="position:absolute;left:522.5px;top:370.4px;width:17.5px;height:8.5px;background:#afbcc4;border-radius:1.5px 0 0 0;"></div>
<svg style="position:absolute;left:522.5px;top:378.9px;overflow:visible;" width="4.5" height="4" viewBox="0 0 4.5 4"><polygon points="0,0 4.5,0 0,4" fill="#afbcc4"/></svg>
<svg style="position:absolute;left:527.6px;top:370.84999999999997px;overflow:visible;" width="7.6" height="7.6" viewBox="0 0 7.6 7.6"><circle cx="3.8" cy="3.8" r="3.8" fill="#c4b8b0"/><circle cx="3.8" cy="3.7239999999999998" r="3.04" fill="#5e3828"/><ellipse cx="4.256" cy="4.18" rx="1.71" ry="2.09" fill="#d6a284"/></svg>
<div style="position:absolute;left:537.4px;top:368.75px;height:11.4px;font-size:5.7px;line-height:11.4px;color:#fff;font-weight:400;white-space:nowrap;">Website Design and Development</div>
<div style="position:absolute;left:520.4px;top:384.7px;width:50.99999999999996px;height:13.7px;background:#fff;border-radius:3px;opacity:0.9;"></div>
<div style="position:absolute;left:521px;top:385.3px;width:49.799999999999955px;height:12.5px;background:#c3ccd2;border:1.5px solid #de3c8e;box-sizing:border-box;border-radius:2.5px;"></div>
<svg style="position:absolute;left:524.0px;top:387.75px;overflow:visible;" width="7.6" height="7.6" viewBox="0 0 7.6 7.6"><circle cx="3.8" cy="3.8" r="3.8" fill="#c4b8b0"/><circle cx="3.8" cy="3.7239999999999998" r="3.04" fill="#5e3828"/><ellipse cx="4.256" cy="4.18" rx="1.71" ry="2.09" fill="#d6a284"/></svg>
<div style="position:absolute;left:534.6px;top:385.45000000000005px;height:11.4px;font-size:5.7px;line-height:11.4px;color:#404040;font-weight:400;white-space:nowrap;">Web &amp; Mobile Site Design</div>
<div style="position:absolute;left:568.4px;top:399.7px;width:72.2px;height:13.7px;background:#fff;border-radius:3px;opacity:0.9;"></div>
<div style="position:absolute;left:569px;top:400.3px;width:71px;height:12.5px;background:#c3ccd2;border:1.5px solid #de3c8e;box-sizing:border-box;border-radius:2.5px;"></div>
<svg style="position:absolute;left:572.0px;top:402.75px;overflow:visible;" width="7.6" height="7.6" viewBox="0 0 7.6 7.6"><circle cx="3.8" cy="3.8" r="3.8" fill="#c4b8b0"/><circle cx="3.8" cy="3.7239999999999998" r="3.04" fill="#5e3828"/><ellipse cx="4.256" cy="4.18" rx="1.71" ry="2.09" fill="#d6a284"/></svg>
<div style="position:absolute;left:582.6px;top:400.45000000000005px;height:11.4px;font-size:5.7px;line-height:11.4px;color:#404040;font-weight:400;white-space:nowrap;">Web &amp; Mobile Site Development</div>
<div style="position:absolute;left:483.3px;top:415.4px;width:126.69999999999999px;height:8.5px;background:#c6d0d6;border-radius:1.5px 1.5px 0 0;"></div>
<div style="position:absolute;left:483.3px;top:415.4px;width:16.69999999999999px;height:8.5px;background:#afbcc4;border-radius:1.5px 0 0 0;"></div>
<svg style="position:absolute;left:483.3px;top:423.9px;overflow:visible;" width="4.5" height="4" viewBox="0 0 4.5 4"><polygon points="0,0 4.5,0 0,4" fill="#afbcc4"/></svg>
<svg style="position:absolute;left:488.4px;top:415.84999999999997px;overflow:visible;" width="7.6" height="7.6" viewBox="0 0 7.6 7.6"><circle cx="3.8" cy="3.8" r="3.8" fill="#c4b8b0"/><circle cx="3.8" cy="3.7239999999999998" r="3.04" fill="#5e3828"/><ellipse cx="4.256" cy="4.18" rx="1.71" ry="2.09" fill="#d6a284"/></svg>
<div style="position:absolute;left:498.2px;top:413.75px;height:11.4px;font-size:5.7px;line-height:11.4px;color:#fff;font-weight:400;white-space:nowrap;">Sales Materials Plan</div>
</div></div>
<div style="position:absolute;left:0px;top:427.5px;width:355.5px;height:5px;background:#fff;"></div>
<div style="position:absolute;left:0px;top:427.5px;width:100px;height:4.6px;background:#c9c9c9;"></div>
<div style="position:absolute;left:358px;top:427.5px;width:242px;height:5px;background:#fff;"></div>
<div style="position:absolute;left:420px;top:427.5px;width:163px;height:4.6px;background:#c9c9c9;"></div>
<div style="position:absolute;left:0px;top:432.1px;width:600px;height:17.9px;background:#e2effc;"></div>
<div style="position:absolute;left:39px;top:433px;width:36px;height:17px;background:#fff;"></div>
<svg style="position:absolute;left:9px;top:439px;overflow:visible;" width="6" height="5.5" viewBox="0 0 6 5.5"><rect x="0" y="0" width="6" height="1.1" fill="#444"/><rect x="0" y="2.2" width="6" height="1.1" fill="#444"/><rect x="0" y="4.4" width="6" height="1.1" fill="#444"/></svg>
<svg style="position:absolute;left:24px;top:439px;overflow:visible;" width="5.5" height="5.5" viewBox="0 0 5.5 5.5"><rect x="2.2" y="0" width="1.1" height="5.5" fill="#444"/><rect x="0" y="2.2" width="5.5" height="1.1" fill="#444"/></svg>
<div style="position:absolute;left:44px;top:435.4px;height:13.0px;font-size:6.5px;line-height:13.0px;color:#1b6fdc;font-weight:700;white-space:nowrap;">Tasks</div>
<svg style="position:absolute;left:67px;top:441px;overflow:visible;" width="3.5" height="2" viewBox="0 0 3.5 2"><polygon points="0,0 3.5,0 1.75,2" fill="#2373d9"/></svg>
</div></div></body></html>
